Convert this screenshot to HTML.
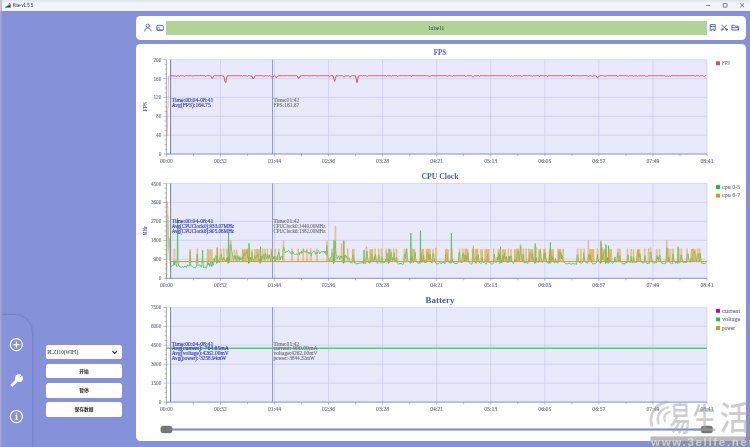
<!DOCTYPE html>
<html lang="zh">
<head>
<meta charset="utf-8">
<title>Kite-v1.5.5</title>
<style>
html,body{margin:0;padding:0;}
body{width:750px;height:447px;overflow:hidden;background:#8592d9;position:relative;font-family:'Liberation Serif','Noto Serif CJK SC',serif;}
.abs{position:absolute;}
#titlebar{left:0;top:0;width:750px;height:11.3px;background:linear-gradient(#dfe2ea 0,#e9ecf3 1.5px,#f1f4fa 3.5px,#f2f5fb 100%);}
#titletext{left:12.7px;top:2.7px;font-family:'Liberation Sans','Noto Sans CJK SC',sans-serif;font-size:4.5px;line-height:6px;color:#1a1a1a;white-space:nowrap;}
#leftedge{left:0;top:11.3px;width:1.7px;height:436px;background:linear-gradient(to right,#a9abc6 0,#9da2cc 60%,#8a96d6 100%);}
#leftedge2{left:0;top:0;width:1.6px;height:11.3px;background:linear-gradient(to right,#cfd0d6 0,#c2c3ca 65%,#9c9da6 100%);}
.card{background:#fff;border-radius:4.5px;}
#toolbar{left:136px;top:16px;width:610px;height:24px;}
#green{left:166px;top:21px;width:541px;height:14px;background:#b1d39a;}
#main{left:136px;top:44px;width:610px;height:396.5px;}
#tab{left:-4px;top:315px;width:35.6px;height:140px;background:#8693da;border-top-right-radius:18px;box-shadow:0 0 3px rgba(40,50,110,0.38);}
.ctl{left:46px;width:76px;height:14.4px;background:#fff;border-radius:2.6px;}
.btxt{left:46px;width:76px;text-align:center;font-family:'Liberation Sans','Noto Sans CJK SC',sans-serif;font-size:4.75px;line-height:6px;color:#1c1c1c;font-weight:bold;white-space:nowrap;}
#wm{left:650px;top:398px;width:100px;height:49px;overflow:hidden;}
</style>
</head>
<body>
<div id="titlebar" class="abs"></div>
<div id="tab" class="abs"></div>
<div id="toolbar" class="abs card"></div>
<div id="green" class="abs"></div>
<div id="main" class="abs card"></div>

<div class="abs ctl" style="top:345px"></div>
<div class="abs ctl" style="top:364.1px"></div>
<div class="abs ctl" style="top:383.3px"></div>
<div class="abs ctl" style="top:402.2px"></div>

<svg class="abs" style="left:0;top:0;will-change:transform" width="750" height="447" viewBox="0 0 750 447">
<!-- title bar icon -->
<g>
<path d="M5.2 7.6 L7.2 5.4 L8.2 5.9 L9.5 2.7 L10.7 4.2 L10.7 7.6 Z" fill="#3e3e30"/>
<path d="M9 4.4 L9.6 3.1 L10.3 4.2 L10.1 5.6 L9.1 5.5Z" fill="#cdb040"/>
<path d="M5 7.7 L5.6 6.5 L7.6 6.3 L8.6 7.7 Z" fill="#2fa4d6"/>
</g>
<!-- window controls -->
<g stroke="#222" stroke-width="0.55" fill="none">
<line x1="706.2" y1="5.5" x2="710.2" y2="5.5"/>
<rect x="723.2" y="3.6" width="3.8" height="3.6" rx="0.5"/>
<path d="M740.2 3.5 L744 7.3 M744 3.5 L740.2 7.3"/>
</g>
<!-- toolbar icons -->
<g stroke="#5261b2" stroke-width="0.92" fill="none" stroke-linecap="round" stroke-linejoin="round">
<circle cx="147.8" cy="25.8" r="1.7"/>
<path d="M144.6 31 C145 29 146.4 28 147.8 28 C149.2 28 150.6 29 151 31"/>
<rect x="156.8" y="25.4" width="6.5" height="5.1" rx="0.9"/>
<path d="M157.6 27.8 L159.8 27.8 L159.8 30 L157.6 30 Z M159.8 29.9 L162.6 29.9" stroke-width="0.6"/>
<path d="M710.6 24.6 L715.2 24.6 L715.2 30.5 L713.9 30.5 L713.9 29.2 L711.9 29.2 L711.9 30.5 L710.6 30.5 Z M710.6 26.4 L715.2 26.4"/>
<path d="M722 25.2 L726.6 29.6 M726.6 25.2 L722 29.6" />
<circle cx="722.1" cy="29.5" r="0.8"/><circle cx="726.5" cy="29.5" r="0.8"/>
<path d="M732.3 25.2 L734.6 25.2 L735.4 26.2 L738.3 26.2 L738.3 30 L732.3 30 Z M732.3 27.7 L738.9 27.7 L738.3 30"/>
</g>
<text x="436.6" y="29.9" font-size="5.2" fill="#2e3a2e" text-anchor="middle" font-family="'Liberation Serif','Noto Serif CJK SC',serif" textLength="15.6" lengthAdjust="spacingAndGlyphs">label1</text>

<rect x="170.6" y="59.7" width="536.40" height="94.30" fill="#e9e9fc"/>
<line x1="220.46" y1="59.7" x2="220.46" y2="154.0" stroke="#c3c7e8" stroke-width="0.6"/>
<line x1="274.52" y1="59.7" x2="274.52" y2="154.0" stroke="#c3c7e8" stroke-width="0.6"/>
<line x1="328.58" y1="59.7" x2="328.58" y2="154.0" stroke="#c3c7e8" stroke-width="0.6"/>
<line x1="382.64" y1="59.7" x2="382.64" y2="154.0" stroke="#c3c7e8" stroke-width="0.6"/>
<line x1="436.70" y1="59.7" x2="436.70" y2="154.0" stroke="#c3c7e8" stroke-width="0.6"/>
<line x1="490.76" y1="59.7" x2="490.76" y2="154.0" stroke="#c3c7e8" stroke-width="0.6"/>
<line x1="544.82" y1="59.7" x2="544.82" y2="154.0" stroke="#c3c7e8" stroke-width="0.6"/>
<line x1="598.88" y1="59.7" x2="598.88" y2="154.0" stroke="#c3c7e8" stroke-width="0.6"/>
<line x1="652.94" y1="59.7" x2="652.94" y2="154.0" stroke="#c3c7e8" stroke-width="0.6"/>
<line x1="707.00" y1="59.7" x2="707.00" y2="154.0" stroke="#c3c7e8" stroke-width="0.6"/>
<line x1="166.4" y1="59.70" x2="707.0" y2="59.70" stroke="#c3c7e8" stroke-width="0.6"/>
<line x1="166.4" y1="78.56" x2="707.0" y2="78.56" stroke="#c3c7e8" stroke-width="0.6"/>
<line x1="166.4" y1="97.42" x2="707.0" y2="97.42" stroke="#c3c7e8" stroke-width="0.6"/>
<line x1="166.4" y1="116.28" x2="707.0" y2="116.28" stroke="#c3c7e8" stroke-width="0.6"/>
<line x1="166.4" y1="135.14" x2="707.0" y2="135.14" stroke="#c3c7e8" stroke-width="0.6"/>
<polyline points="167.10,136.08 167.30,128.07 167.60,124.77 167.80,109.21 168.10,105.91 168.30,87.99 168.70,76.20 170.60,75.73" fill="none" stroke="#eba8b8" stroke-width="0.9" stroke-linejoin="round" opacity="1"/><polyline points="170.60,75.73 171.40,75.73 172.20,75.73 173.00,76.01 173.80,76.01 174.60,76.01 175.40,75.73 176.20,76.58 177.00,76.16 177.80,75.73 178.60,76.01 179.40,76.39 180.20,75.73 181.00,75.73 181.80,76.01 182.60,75.73 183.40,75.73 184.20,76.39 185.00,75.73 185.80,75.73 186.60,75.54 187.40,75.73 188.20,75.73 189.00,76.01 189.80,75.73 190.60,75.73 191.40,75.73 192.20,76.16 193.00,75.73 193.80,75.73 194.60,75.73 195.40,75.73 196.20,75.73 197.00,75.73 197.80,75.73 198.60,75.73 199.40,75.73 200.20,75.73 201.00,75.54 201.80,75.73 202.60,75.73 203.40,75.73 204.20,75.73 205.00,75.73 205.80,76.58 206.60,75.73 207.40,75.73 208.20,75.73 209.00,75.73 209.80,75.73 210.60,76.01 211.40,77.15 212.20,78.56 213.00,77.15 213.80,75.73 214.60,75.73 215.40,75.73 216.20,75.73 217.00,75.73 217.80,75.73 218.60,75.73 219.40,75.73 220.20,75.54 221.00,75.73 221.80,75.73 222.60,75.73 223.40,75.73 224.20,77.73 225.00,81.74 225.80,82.59 226.60,77.73 227.40,75.73 228.20,75.73 229.00,75.73 229.80,75.73 230.60,75.73 231.40,75.73 232.20,75.73 233.00,75.73 233.80,75.73 234.60,75.73 235.40,75.73 236.20,75.73 237.00,75.73 237.80,75.73 238.60,75.73 239.40,75.73 240.20,75.73 241.00,75.73 241.80,75.73 242.60,76.39 243.40,75.73 244.20,75.73 245.00,75.73 245.80,75.73 246.60,75.73 247.40,76.58 248.20,75.73 249.00,75.73 249.80,75.73 250.60,76.01 251.40,75.73 252.20,76.91 253.00,78.80 253.80,78.32 254.60,76.44 255.40,75.73 256.20,75.73 257.00,75.73 257.80,75.73 258.60,75.73 259.40,75.73 260.20,75.73 261.00,75.73 261.80,75.73 262.60,75.73 263.40,76.01 264.20,76.16 265.00,75.73 265.80,75.73 266.60,75.73 267.40,75.73 268.20,76.39 269.00,75.73 269.80,75.73 270.60,75.97 271.40,76.91 272.20,77.38 273.00,77.29 273.80,75.73 274.60,75.73 275.40,76.32 276.20,77.69 277.00,77.03 277.80,76.08 278.60,75.73 279.40,75.73 280.20,75.73 281.00,75.73 281.80,75.73 282.60,75.73 283.40,75.73 284.20,75.73 285.00,75.73 285.80,75.73 286.60,75.73 287.40,75.54 288.20,75.73 289.00,75.73 289.80,75.73 290.60,75.73 291.40,75.73 292.20,75.73 293.00,75.73 293.80,75.73 294.60,75.73 295.40,75.73 296.20,75.73 297.00,75.73 297.80,76.97 298.60,78.62 299.40,77.79 300.20,76.14 301.00,75.73 301.80,75.73 302.60,75.73 303.40,75.73 304.20,75.73 305.00,75.73 305.80,75.73 306.60,75.73 307.40,75.73 308.20,75.73 309.00,75.73 309.80,76.16 310.60,75.73 311.40,75.73 312.20,75.73 313.00,75.73 313.80,75.73 314.60,75.73 315.40,75.73 316.20,75.73 317.00,75.73 317.80,76.16 318.60,75.73 319.40,75.73 320.20,75.73 321.00,75.73 321.80,75.73 322.60,75.73 323.40,75.73 324.20,75.73 325.00,75.73 325.80,75.73 326.60,75.73 327.40,75.73 328.20,75.73 329.00,75.73 329.80,76.39 330.60,75.73 331.40,75.73 332.20,75.73 333.00,75.73 333.80,78.56 334.60,81.39 335.40,78.56 336.20,75.73 337.00,75.73 337.80,76.16 338.60,75.73 339.40,75.73 340.20,75.73 341.00,75.73 341.80,75.73 342.60,75.91 343.40,76.62 344.20,76.97 345.00,76.26 345.80,75.73 346.60,75.73 347.40,75.73 348.20,75.73 349.00,76.26 349.80,76.97 350.60,76.62 351.40,75.91 352.20,75.73 353.00,75.73 353.80,75.73 354.60,75.73 355.40,75.73 356.20,78.80 357.00,82.71 357.80,78.80 358.60,75.73 359.40,75.73 360.20,75.73 361.00,75.73 361.80,75.73 362.60,76.16 363.40,75.73 364.20,75.73 365.00,75.73 365.80,75.73 366.60,76.01 367.40,76.39 368.20,75.73 369.00,75.73 369.80,75.73 370.60,75.73 371.40,75.73 372.20,75.73 373.00,75.73 373.80,75.73 374.60,75.73 375.40,75.73 376.20,75.73 377.00,75.73 377.80,75.73 378.60,75.73 379.40,75.73 380.20,75.73 381.00,75.73 381.80,75.73 382.60,75.73 383.40,75.73 384.20,75.73 385.00,75.73 385.80,75.73 386.60,76.58 387.40,75.73 388.20,75.73 389.00,75.73 389.80,75.73 390.60,75.73 391.40,76.39 392.20,75.73 393.00,75.73 393.80,75.73 394.60,75.73 395.40,75.73 396.20,75.73 397.00,75.73 397.80,76.58 398.60,75.73 399.40,75.73 400.20,75.73 401.00,75.73 401.80,75.73 402.60,75.73 403.40,75.73 404.20,75.73 405.00,75.54 405.80,76.01 406.60,75.73 407.40,75.73 408.20,75.73 409.00,75.73 409.80,75.73 410.60,75.73 411.40,76.39 412.20,75.73 413.00,75.54 413.80,75.73 414.60,75.73 415.40,75.73 416.20,75.73 417.00,75.73 417.80,75.73 418.60,75.73 419.40,75.73 420.20,75.73 421.00,75.73 421.80,75.73 422.60,75.73 423.40,75.73 424.20,75.73 425.00,75.73 425.80,75.73 426.60,75.73 427.40,75.73 428.20,76.16 429.00,75.73 429.80,76.39 430.60,76.16 431.40,75.73 432.20,75.73 433.00,75.73 433.80,75.73 434.60,75.73 435.40,76.01 436.20,75.73 437.00,75.73 437.80,75.73 438.60,75.73 439.40,75.73 440.20,75.73 441.00,75.73 441.80,75.73 442.60,75.73 443.40,75.73 444.20,75.73 445.00,75.73 445.80,75.73 446.60,75.73 447.40,76.16 448.20,75.73 449.00,75.73 449.80,75.73 450.60,75.73 451.40,75.73 452.20,76.58 453.00,75.73 453.80,75.73 454.60,75.73 455.40,75.73 456.20,75.73 457.00,75.73 457.80,75.73 458.60,75.73 459.40,75.73 460.20,75.73 461.00,75.73 461.80,75.73 462.60,75.73 463.40,75.73 464.20,75.54 465.00,75.73 465.80,76.58 466.60,75.73 467.40,75.73 468.20,75.73 469.00,75.73 469.80,75.73 470.60,75.73 471.40,75.73 472.20,76.44 473.00,77.15 473.80,76.44 474.60,75.73 475.40,75.73 476.20,75.73 477.00,75.73 477.80,75.73 478.60,75.73 479.40,76.58 480.20,75.54 481.00,75.73 481.80,75.73 482.60,75.73 483.40,75.54 484.20,75.73 485.00,75.73 485.80,75.73 486.60,75.73 487.40,75.73 488.20,75.73 489.00,76.01 489.80,75.73 490.60,75.73 491.40,75.73 492.20,75.73 493.00,75.73 493.80,75.73 494.60,75.73 495.40,75.73 496.20,75.73 497.00,75.73 497.80,75.73 498.60,75.73 499.40,75.73 500.20,75.73 501.00,75.73 501.80,75.73 502.60,75.73 503.40,75.73 504.20,75.73 505.00,75.73 505.80,75.73 506.60,76.01 507.40,75.73 508.20,75.73 509.00,75.73 509.80,75.73 510.60,76.16 511.40,75.73 512.20,75.73 513.00,76.58 513.80,75.73 514.60,75.73 515.40,75.73 516.20,75.73 517.00,75.73 517.80,76.16 518.60,75.73 519.40,75.73 520.20,75.73 521.00,75.73 521.80,76.58 522.60,75.73 523.40,75.54 524.20,75.73 525.00,75.73 525.80,75.73 526.60,75.73 527.40,75.73 528.20,75.73 529.00,75.54 529.80,75.73 530.60,75.73 531.40,75.73 532.20,76.39 533.00,75.73 533.80,75.73 534.60,75.73 535.40,75.73 536.20,75.73 537.00,75.73 537.80,75.73 538.60,75.73 539.40,76.39 540.20,75.73 541.00,75.73 541.80,75.73 542.60,75.73 543.40,75.73 544.20,76.01 545.00,75.73 545.80,75.73 546.60,75.73 547.40,76.58 548.20,76.01 549.00,75.73 549.80,75.73 550.60,75.73 551.40,75.73 552.20,75.73 553.00,75.73 553.80,75.73 554.60,75.73 555.40,75.73 556.20,75.73 557.00,75.73 557.80,75.73 558.60,75.73 559.40,75.73 560.20,75.73 561.00,75.73 561.80,75.73 562.60,75.73 563.40,76.16 564.20,75.73 565.00,75.73 565.80,75.73 566.60,75.73 567.40,75.73 568.20,75.73 569.00,75.54 569.80,75.54 570.60,75.73 571.40,76.39 572.20,75.73 573.00,75.73 573.80,75.73 574.60,75.73 575.40,75.73 576.20,75.73 577.00,75.73 577.80,75.73 578.60,75.73 579.40,75.73 580.20,76.16 581.00,75.54 581.80,75.73 582.60,75.73 583.40,75.73 584.20,75.73 585.00,75.73 585.80,75.73 586.60,75.73 587.40,75.73 588.20,76.58 589.00,75.73 589.80,75.73 590.60,75.73 591.40,75.73 592.20,76.58 593.00,75.73 593.80,75.73 594.60,75.73 595.40,75.73 596.20,76.01 597.00,77.29 597.80,77.38 598.60,76.91 599.40,75.97 600.20,75.73 601.00,75.73 601.80,75.73 602.60,75.73 603.40,75.73 604.20,75.73 605.00,76.39 605.80,76.01 606.60,75.73 607.40,75.73 608.20,75.73 609.00,75.73 609.80,75.73 610.60,75.73 611.40,75.73 612.20,75.73 613.00,75.54 613.80,75.73 614.60,75.73 615.40,75.73 616.20,75.73 617.00,75.73 617.80,76.58 618.60,75.73 619.40,75.73 620.20,75.73 621.00,75.73 621.80,75.73 622.60,75.73 623.40,75.73 624.20,75.73 625.00,75.73 625.80,75.73 626.60,75.73 627.40,75.73 628.20,76.39 629.00,75.73 629.80,75.73 630.60,75.73 631.40,75.73 632.20,75.73 633.00,75.73 633.80,76.58 634.60,75.73 635.40,75.73 636.20,75.73 637.00,75.73 637.80,76.58 638.60,75.73 639.40,75.73 640.20,75.73 641.00,75.73 641.80,75.73 642.60,75.73 643.40,75.73 644.20,75.73 645.00,75.73 645.80,76.58 646.60,76.16 647.40,76.39 648.20,75.73 649.00,75.73 649.80,75.73 650.60,75.73 651.40,75.54 652.20,75.73 653.00,75.73 653.80,75.73 654.60,75.54 655.40,75.73 656.20,75.73 657.00,75.73 657.80,75.73 658.60,75.73 659.40,75.54 660.20,75.73 661.00,75.73 661.80,75.73 662.60,75.73 663.40,75.73 664.20,75.73 665.00,75.73 665.80,76.58 666.60,75.73 667.40,75.73 668.20,76.58 669.00,75.73 669.80,75.73 670.60,76.39 671.40,75.73 672.20,75.73 673.00,75.73 673.80,75.54 674.60,75.73 675.40,75.73 676.20,75.73 677.00,75.54 677.80,75.73 678.60,75.73 679.40,75.73 680.20,75.73 681.00,75.73 681.80,75.73 682.60,75.73 683.40,75.73 684.20,75.73 685.00,75.73 685.80,75.73 686.60,75.73 687.40,75.73 688.20,75.73 689.00,75.73 689.80,75.73 690.60,75.73 691.40,75.73 692.20,75.73 693.00,75.73 693.80,75.73 694.60,75.73 695.40,76.16 696.20,75.73 697.00,75.73 697.80,75.73 698.60,75.73 699.40,76.16 700.20,75.73 701.00,75.73 701.80,75.73 702.60,75.73 703.40,75.73 704.20,76.58 705.00,75.73 705.80,75.73" fill="none" stroke="#de4c6c" stroke-width="1.0" stroke-linejoin="round" opacity="1"/>
<line x1="166.4" y1="59.7" x2="166.4" y2="154.0" stroke="#8a90b8" stroke-width="0.8"/>
<line x1="166.0" y1="154.0" x2="707.0" y2="154.0" stroke="#7482d2" stroke-width="0.9"/>
<line x1="163.40" y1="59.70" x2="166.4" y2="59.70" stroke="#8a90b8" stroke-width="0.6"/>
<line x1="164.60" y1="64.42" x2="166.4" y2="64.42" stroke="#8a90b8" stroke-width="0.6"/>
<line x1="164.60" y1="69.13" x2="166.4" y2="69.13" stroke="#8a90b8" stroke-width="0.6"/>
<line x1="164.60" y1="73.84" x2="166.4" y2="73.84" stroke="#8a90b8" stroke-width="0.6"/>
<line x1="163.40" y1="78.56" x2="166.4" y2="78.56" stroke="#8a90b8" stroke-width="0.6"/>
<line x1="164.60" y1="83.28" x2="166.4" y2="83.28" stroke="#8a90b8" stroke-width="0.6"/>
<line x1="164.60" y1="87.99" x2="166.4" y2="87.99" stroke="#8a90b8" stroke-width="0.6"/>
<line x1="164.60" y1="92.71" x2="166.4" y2="92.71" stroke="#8a90b8" stroke-width="0.6"/>
<line x1="163.40" y1="97.42" x2="166.4" y2="97.42" stroke="#8a90b8" stroke-width="0.6"/>
<line x1="164.60" y1="102.13" x2="166.4" y2="102.13" stroke="#8a90b8" stroke-width="0.6"/>
<line x1="164.60" y1="106.85" x2="166.4" y2="106.85" stroke="#8a90b8" stroke-width="0.6"/>
<line x1="164.60" y1="111.56" x2="166.4" y2="111.56" stroke="#8a90b8" stroke-width="0.6"/>
<line x1="163.40" y1="116.28" x2="166.4" y2="116.28" stroke="#8a90b8" stroke-width="0.6"/>
<line x1="164.60" y1="121.00" x2="166.4" y2="121.00" stroke="#8a90b8" stroke-width="0.6"/>
<line x1="164.60" y1="125.71" x2="166.4" y2="125.71" stroke="#8a90b8" stroke-width="0.6"/>
<line x1="164.60" y1="130.43" x2="166.4" y2="130.43" stroke="#8a90b8" stroke-width="0.6"/>
<line x1="163.40" y1="135.14" x2="166.4" y2="135.14" stroke="#8a90b8" stroke-width="0.6"/>
<line x1="164.60" y1="139.86" x2="166.4" y2="139.86" stroke="#8a90b8" stroke-width="0.6"/>
<line x1="164.60" y1="144.57" x2="166.4" y2="144.57" stroke="#8a90b8" stroke-width="0.6"/>
<line x1="164.60" y1="149.29" x2="166.4" y2="149.29" stroke="#8a90b8" stroke-width="0.6"/>
<line x1="163.40" y1="154.00" x2="166.4" y2="154.00" stroke="#8a90b8" stroke-width="0.6"/>
<text x="161.30" y="61.70" font-size="5.2" fill="#6b7288" text-anchor="end" font-weight="normal" font-family="'Liberation Serif','Noto Serif CJK SC',serif" textLength="7.80" lengthAdjust="spacingAndGlyphs" stroke="#6b7288" stroke-width="0.12" >200</text>
<text x="161.30" y="80.56" font-size="5.2" fill="#6b7288" text-anchor="end" font-weight="normal" font-family="'Liberation Serif','Noto Serif CJK SC',serif" textLength="7.80" lengthAdjust="spacingAndGlyphs" stroke="#6b7288" stroke-width="0.12" >160</text>
<text x="161.30" y="99.42" font-size="5.2" fill="#6b7288" text-anchor="end" font-weight="normal" font-family="'Liberation Serif','Noto Serif CJK SC',serif" textLength="7.80" lengthAdjust="spacingAndGlyphs" stroke="#6b7288" stroke-width="0.12" >120</text>
<text x="161.30" y="118.28" font-size="5.2" fill="#6b7288" text-anchor="end" font-weight="normal" font-family="'Liberation Serif','Noto Serif CJK SC',serif" textLength="5.20" lengthAdjust="spacingAndGlyphs" stroke="#6b7288" stroke-width="0.12" >80</text>
<text x="161.30" y="137.14" font-size="5.2" fill="#6b7288" text-anchor="end" font-weight="normal" font-family="'Liberation Serif','Noto Serif CJK SC',serif" textLength="5.20" lengthAdjust="spacingAndGlyphs" stroke="#6b7288" stroke-width="0.12" >40</text>
<text x="161.30" y="156.00" font-size="5.2" fill="#6b7288" text-anchor="end" font-weight="normal" font-family="'Liberation Serif','Noto Serif CJK SC',serif" textLength="2.60" lengthAdjust="spacingAndGlyphs" stroke="#6b7288" stroke-width="0.12" >0</text>
<line x1="166.40" y1="154.0" x2="166.40" y2="156.60" stroke="#8a90b8" stroke-width="0.6"/>
<line x1="193.43" y1="154.0" x2="193.43" y2="156.20" stroke="#8a90b8" stroke-width="0.6"/>
<line x1="220.46" y1="154.0" x2="220.46" y2="156.60" stroke="#8a90b8" stroke-width="0.6"/>
<line x1="247.49" y1="154.0" x2="247.49" y2="156.20" stroke="#8a90b8" stroke-width="0.6"/>
<line x1="274.52" y1="154.0" x2="274.52" y2="156.60" stroke="#8a90b8" stroke-width="0.6"/>
<line x1="301.55" y1="154.0" x2="301.55" y2="156.20" stroke="#8a90b8" stroke-width="0.6"/>
<line x1="328.58" y1="154.0" x2="328.58" y2="156.60" stroke="#8a90b8" stroke-width="0.6"/>
<line x1="355.61" y1="154.0" x2="355.61" y2="156.20" stroke="#8a90b8" stroke-width="0.6"/>
<line x1="382.64" y1="154.0" x2="382.64" y2="156.60" stroke="#8a90b8" stroke-width="0.6"/>
<line x1="409.67" y1="154.0" x2="409.67" y2="156.20" stroke="#8a90b8" stroke-width="0.6"/>
<line x1="436.70" y1="154.0" x2="436.70" y2="156.60" stroke="#8a90b8" stroke-width="0.6"/>
<line x1="463.73" y1="154.0" x2="463.73" y2="156.20" stroke="#8a90b8" stroke-width="0.6"/>
<line x1="490.76" y1="154.0" x2="490.76" y2="156.60" stroke="#8a90b8" stroke-width="0.6"/>
<line x1="517.79" y1="154.0" x2="517.79" y2="156.20" stroke="#8a90b8" stroke-width="0.6"/>
<line x1="544.82" y1="154.0" x2="544.82" y2="156.60" stroke="#8a90b8" stroke-width="0.6"/>
<line x1="571.85" y1="154.0" x2="571.85" y2="156.20" stroke="#8a90b8" stroke-width="0.6"/>
<line x1="598.88" y1="154.0" x2="598.88" y2="156.60" stroke="#8a90b8" stroke-width="0.6"/>
<line x1="625.91" y1="154.0" x2="625.91" y2="156.20" stroke="#8a90b8" stroke-width="0.6"/>
<line x1="652.94" y1="154.0" x2="652.94" y2="156.60" stroke="#8a90b8" stroke-width="0.6"/>
<line x1="679.97" y1="154.0" x2="679.97" y2="156.20" stroke="#8a90b8" stroke-width="0.6"/>
<line x1="707.00" y1="154.0" x2="707.00" y2="156.60" stroke="#8a90b8" stroke-width="0.6"/>
<text x="166.40" y="162.70" font-size="5.2" fill="#6b7288" text-anchor="middle" font-weight="normal" font-family="'Liberation Serif','Noto Serif CJK SC',serif" textLength="13.00" lengthAdjust="spacingAndGlyphs" stroke="#6b7288" stroke-width="0.12" >00:00</text>
<text x="220.46" y="162.70" font-size="5.2" fill="#6b7288" text-anchor="middle" font-weight="normal" font-family="'Liberation Serif','Noto Serif CJK SC',serif" textLength="13.00" lengthAdjust="spacingAndGlyphs" stroke="#6b7288" stroke-width="0.12" >00:52</text>
<text x="274.52" y="162.70" font-size="5.2" fill="#6b7288" text-anchor="middle" font-weight="normal" font-family="'Liberation Serif','Noto Serif CJK SC',serif" textLength="13.00" lengthAdjust="spacingAndGlyphs" stroke="#6b7288" stroke-width="0.12" >01:44</text>
<text x="328.58" y="162.70" font-size="5.2" fill="#6b7288" text-anchor="middle" font-weight="normal" font-family="'Liberation Serif','Noto Serif CJK SC',serif" textLength="13.00" lengthAdjust="spacingAndGlyphs" stroke="#6b7288" stroke-width="0.12" >02:36</text>
<text x="382.64" y="162.70" font-size="5.2" fill="#6b7288" text-anchor="middle" font-weight="normal" font-family="'Liberation Serif','Noto Serif CJK SC',serif" textLength="13.00" lengthAdjust="spacingAndGlyphs" stroke="#6b7288" stroke-width="0.12" >03:28</text>
<text x="436.70" y="162.70" font-size="5.2" fill="#6b7288" text-anchor="middle" font-weight="normal" font-family="'Liberation Serif','Noto Serif CJK SC',serif" textLength="13.00" lengthAdjust="spacingAndGlyphs" stroke="#6b7288" stroke-width="0.12" >04:21</text>
<text x="490.76" y="162.70" font-size="5.2" fill="#6b7288" text-anchor="middle" font-weight="normal" font-family="'Liberation Serif','Noto Serif CJK SC',serif" textLength="13.00" lengthAdjust="spacingAndGlyphs" stroke="#6b7288" stroke-width="0.12" >05:13</text>
<text x="544.82" y="162.70" font-size="5.2" fill="#6b7288" text-anchor="middle" font-weight="normal" font-family="'Liberation Serif','Noto Serif CJK SC',serif" textLength="13.00" lengthAdjust="spacingAndGlyphs" stroke="#6b7288" stroke-width="0.12" >06:05</text>
<text x="598.88" y="162.70" font-size="5.2" fill="#6b7288" text-anchor="middle" font-weight="normal" font-family="'Liberation Serif','Noto Serif CJK SC',serif" textLength="13.00" lengthAdjust="spacingAndGlyphs" stroke="#6b7288" stroke-width="0.12" >06:57</text>
<text x="652.94" y="162.70" font-size="5.2" fill="#6b7288" text-anchor="middle" font-weight="normal" font-family="'Liberation Serif','Noto Serif CJK SC',serif" textLength="13.00" lengthAdjust="spacingAndGlyphs" stroke="#6b7288" stroke-width="0.12" >07:49</text>
<text x="707.00" y="162.70" font-size="5.2" fill="#6b7288" text-anchor="middle" font-weight="normal" font-family="'Liberation Serif','Noto Serif CJK SC',serif" textLength="13.00" lengthAdjust="spacingAndGlyphs" stroke="#6b7288" stroke-width="0.12" >08:41</text>
<line x1="170.6" y1="59.7" x2="170.6" y2="154.0" stroke="#747cb8" stroke-width="1.0"/>
<line x1="272.5" y1="59.7" x2="272.5" y2="154.0" stroke="#8a90b6" stroke-width="0.9"/>
<text x="171.70" y="102.25" font-size="5.2" fill="#2b35c8" text-anchor="start" font-weight="normal" font-family="'Liberation Serif','Noto Serif CJK SC',serif" textLength="41.60" lengthAdjust="spacingAndGlyphs" stroke="#2b35c8" stroke-width="0.12" >Time:00:04-08:41</text>
<text x="171.70" y="107.10" font-size="5.2" fill="#2b35c8" text-anchor="start" font-weight="normal" font-family="'Liberation Serif','Noto Serif CJK SC',serif" textLength="39.00" lengthAdjust="spacingAndGlyphs" stroke="#2b35c8" stroke-width="0.12" >Avg(FPS):164.75</text>
<text x="273.40" y="102.25" font-size="5.2" fill="#74747e" text-anchor="start" font-weight="normal" font-family="'Liberation Serif','Noto Serif CJK SC',serif" textLength="26.00" lengthAdjust="spacingAndGlyphs" stroke="#74747e" stroke-width="0.12" >Time:01:42</text>
<text x="273.40" y="107.10" font-size="5.2" fill="#74747e" text-anchor="start" font-weight="normal" font-family="'Liberation Serif','Noto Serif CJK SC',serif" textLength="26.00" lengthAdjust="spacingAndGlyphs" stroke="#74747e" stroke-width="0.12" >FPS:161.67</text>
<text transform="translate(146.6,106.85) rotate(-90)" font-size="6.2" font-weight="bold" fill="#4a5aa0" text-anchor="middle" font-family="'Liberation Serif','Noto Serif CJK SC',serif" textLength="9.30" lengthAdjust="spacingAndGlyphs">FPS</text>
<text x="440" y="55.40" font-size="8.2" font-weight="bold" fill="#4c5ca2" text-anchor="middle" font-family="'Liberation Serif','Noto Serif CJK SC',serif" textLength="12.36" lengthAdjust="spacingAndGlyphs">FPS</text>
<rect x="716" y="61.30" width="4" height="3.9" fill="#e24a5e"/>
<text x="722.10" y="64.90" font-size="5.2" fill="#6d7490" text-anchor="start" font-weight="normal" font-family="'Liberation Serif','Noto Serif CJK SC',serif" textLength="7.80" lengthAdjust="spacingAndGlyphs" stroke="#6d7490" stroke-width="0.12" >FPS</text>
<rect x="170.6" y="183.5" width="536.40" height="94.80" fill="#e9e9fc"/>
<line x1="220.46" y1="183.5" x2="220.46" y2="278.3" stroke="#c3c7e8" stroke-width="0.6"/>
<line x1="274.52" y1="183.5" x2="274.52" y2="278.3" stroke="#c3c7e8" stroke-width="0.6"/>
<line x1="328.58" y1="183.5" x2="328.58" y2="278.3" stroke="#c3c7e8" stroke-width="0.6"/>
<line x1="382.64" y1="183.5" x2="382.64" y2="278.3" stroke="#c3c7e8" stroke-width="0.6"/>
<line x1="436.70" y1="183.5" x2="436.70" y2="278.3" stroke="#c3c7e8" stroke-width="0.6"/>
<line x1="490.76" y1="183.5" x2="490.76" y2="278.3" stroke="#c3c7e8" stroke-width="0.6"/>
<line x1="544.82" y1="183.5" x2="544.82" y2="278.3" stroke="#c3c7e8" stroke-width="0.6"/>
<line x1="598.88" y1="183.5" x2="598.88" y2="278.3" stroke="#c3c7e8" stroke-width="0.6"/>
<line x1="652.94" y1="183.5" x2="652.94" y2="278.3" stroke="#c3c7e8" stroke-width="0.6"/>
<line x1="707.00" y1="183.5" x2="707.00" y2="278.3" stroke="#c3c7e8" stroke-width="0.6"/>
<line x1="166.4" y1="183.50" x2="707.0" y2="183.50" stroke="#c3c7e8" stroke-width="0.6"/>
<line x1="166.4" y1="202.46" x2="707.0" y2="202.46" stroke="#c3c7e8" stroke-width="0.6"/>
<line x1="166.4" y1="221.42" x2="707.0" y2="221.42" stroke="#c3c7e8" stroke-width="0.6"/>
<line x1="166.4" y1="240.38" x2="707.0" y2="240.38" stroke="#c3c7e8" stroke-width="0.6"/>
<line x1="166.4" y1="259.34" x2="707.0" y2="259.34" stroke="#c3c7e8" stroke-width="0.6"/>
<polyline points="166.60,278.30 167.00,240.38 167.40,214.05 168.00,217.21 168.60,246.70 169.40,238.27 170.00,263.55 170.60,265.66" fill="none" stroke="#7fd68a" stroke-width="0.9" stroke-linejoin="round" opacity="1"/><polyline points="166.60,278.30 167.20,201.41 167.80,206.67 168.40,246.70 169.40,259.34 170.60,261.24" fill="none" stroke="#e6c26a" stroke-width="0.9" stroke-linejoin="round" opacity="1"/><polyline points="170.90,267.47 171.50,265.97 172.10,265.42 172.70,265.52 173.30,265.46 173.90,260.80 174.50,264.95 175.10,261.25 175.70,263.21 176.30,265.31 176.90,266.75 177.10,263.55 177.60,218.05 178.10,262.50 178.70,266.05 179.30,265.98 179.90,267.07 180.50,267.11 181.10,267.63 181.70,267.24 182.30,266.39 182.90,267.11 183.50,267.25 184.10,267.17 184.70,265.91 185.30,266.96 185.90,265.89 186.50,267.59 187.10,265.88 187.70,264.88 188.30,265.99 188.90,266.24 189.50,265.84 189.60,263.55 190.10,251.33 190.60,262.50 190.70,265.64 191.30,265.45 191.90,266.46 192.50,266.85 193.10,267.03 193.70,267.76 194.30,267.50 194.90,268.14 195.50,267.95 196.10,266.74 196.70,263.55 197.20,254.07 197.70,262.50 197.90,265.75 198.50,264.94 199.10,264.71 199.70,265.10 200.30,265.21 200.90,266.81 201.50,267.24 202.10,263.55 202.60,250.07 203.10,262.50 203.30,266.99 203.90,268.03 204.50,267.15 205.10,266.43 205.70,267.81 206.30,268.34 206.90,267.04 207.50,262.35 208.10,265.10 208.70,262.72 209.30,264.02 209.90,266.52 210.50,261.32 211.10,263.82 211.70,266.72 212.30,261.80 212.90,265.30 213.50,265.10 214.10,258.06 214.70,261.00 215.30,257.34 215.90,255.43 216.50,256.54 216.80,263.55 217.30,247.75 217.80,262.50 218.30,260.21 218.90,262.21 219.50,262.63 220.10,256.63 220.70,255.02 221.30,254.19 221.90,258.91 222.50,260.43 223.10,258.46 223.70,257.46 224.30,260.01 224.90,260.18 225.50,260.31 226.10,261.95 226.70,257.96 227.30,261.28 227.90,257.31 228.10,263.55 228.60,232.59 229.10,262.50 229.70,256.54 230.30,244.53 230.90,244.61 231.50,250.13 232.10,252.22 232.70,257.36 233.30,260.74 233.90,258.14 234.50,255.59 235.10,258.50 235.70,255.66 236.30,259.86 236.90,261.00 237.50,256.82 238.10,255.54 238.70,259.07 239.30,260.75 239.90,256.65 240.50,259.58 241.10,259.51 241.70,258.14 242.30,256.76 242.90,260.80 243.50,254.17 244.10,252.65 244.70,255.62 245.30,254.77 245.90,253.19 246.50,253.90 247.10,249.60 247.70,257.56 248.30,257.42 248.50,263.55 249.00,243.22 249.50,262.50 250.10,257.04 250.70,259.39 251.30,260.60 251.90,252.10 252.50,257.16 253.10,260.36 253.70,261.66 254.30,258.01 254.90,255.67 255.50,258.75 256.10,257.79 256.70,255.49 257.30,256.52 257.90,253.30 258.50,257.61 259.10,260.55 259.70,259.39 260.00,263.55 260.50,246.70 261.00,262.50 261.50,257.29 262.10,255.82 262.70,258.64 263.30,254.71 263.90,255.27 264.50,259.90 265.10,253.30 265.70,254.42 266.30,258.73 266.90,258.50 267.50,254.09 268.10,258.76 268.70,256.48 269.30,254.80 269.90,258.59 270.50,260.52 271.10,257.49 271.70,251.47 272.30,256.47 272.90,258.19 273.50,258.91 274.10,256.07 274.70,260.02 275.30,261.98 275.90,256.43 276.50,257.26 277.10,259.95 277.70,255.90 278.30,254.53 278.90,252.05 279.50,256.89 280.10,259.91 280.70,256.77 281.30,256.65 281.90,256.10 282.50,259.50 283.10,249.61 283.70,247.15 284.30,249.68 284.90,251.40 285.50,253.00 286.10,251.79 286.70,251.04 287.30,251.53 287.90,251.32 288.50,250.29 289.10,250.83 289.70,251.50 290.30,252.73 290.90,253.65 291.50,253.94 292.10,251.26 292.70,253.33 293.30,252.29 293.90,253.63 294.50,254.34 295.10,254.63 295.70,254.16 296.30,253.99 296.90,254.01 297.50,254.65 298.10,254.25 298.70,253.40 299.30,254.77 299.90,252.12 300.50,252.65 301.10,253.67 301.70,251.20 302.30,252.81 302.90,251.91 303.50,249.13 304.10,251.48 304.70,251.87 305.30,251.36 305.90,252.40 306.50,250.20 307.10,251.81 307.70,252.99 308.30,252.27 308.90,253.99 309.50,253.46 310.10,252.14 310.70,253.36 311.30,256.24 311.90,252.70 312.50,252.57 313.10,251.98 313.70,250.94 314.30,250.44 314.90,252.39 315.50,254.37 316.10,252.05 316.70,253.87 317.30,252.75 317.90,251.59 318.50,250.52 319.10,251.70 319.70,253.75 320.30,252.78 320.90,252.51 321.50,251.74 322.10,252.21 322.70,251.91 323.30,251.08 323.90,251.91 324.50,252.66 325.10,250.93 325.70,253.03 326.30,255.02 326.90,245.29 327.50,252.22 328.10,257.42 328.70,258.69 329.30,261.22 329.90,262.14 330.50,257.20 331.10,257.04 331.70,257.28 332.30,252.57 332.90,253.22 333.50,263.55 334.00,240.38 334.50,262.50 334.70,256.74 335.30,241.21 335.90,254.18 336.50,254.76 337.10,258.81 337.70,257.60 338.30,256.62 338.90,255.63 339.50,259.46 340.10,257.71 340.70,255.96 341.30,257.91 341.90,256.49 342.50,256.62 343.10,257.81 343.30,263.55 343.80,240.80 344.30,262.50 344.90,255.00 345.50,255.84 346.10,257.43 346.70,256.01 347.30,258.27 347.90,259.42 348.50,258.83 349.10,257.73 349.70,260.68 350.30,262.68 350.90,263.04 351.50,262.85 352.10,262.05 352.70,254.67 353.30,255.24 353.90,260.32 354.50,262.56 355.10,263.60 355.70,263.11 356.30,263.63 356.90,264.17 357.50,263.12 358.10,262.89 358.70,263.85 359.30,263.01 359.90,263.15 360.50,262.92 361.10,263.02 361.70,262.67 362.30,262.72 362.90,262.65 363.50,263.55 364.00,249.86 364.50,262.50 364.70,263.40 365.30,263.23 365.90,263.49 366.50,253.51 367.10,251.43 367.70,258.34 368.30,261.01 368.90,263.09 369.50,262.87 370.10,263.14 370.70,262.13 371.30,254.56 371.90,254.06 372.50,259.70 373.10,261.61 373.70,261.64 374.30,256.69 374.90,259.74 375.50,254.14 376.10,258.63 376.70,261.50 377.30,263.20 377.90,263.31 378.50,255.23 379.10,255.69 379.70,260.04 380.30,262.35 380.90,263.40 381.50,262.17 382.10,256.64 382.70,261.26 383.30,263.19 383.90,262.23 384.50,262.35 385.10,261.91 385.70,259.03 386.30,260.65 386.90,252.98 387.50,258.45 388.10,261.74 388.50,263.55 389.00,248.81 389.50,262.50 389.90,261.89 390.50,255.99 391.10,252.17 391.70,257.80 392.30,260.74 392.90,257.46 393.50,259.94 394.10,252.66 394.70,257.88 395.30,261.56 395.90,262.28 396.50,257.06 397.10,261.54 397.70,263.57 398.30,264.39 398.90,263.58 399.50,264.20 400.10,263.03 400.70,264.04 401.30,263.12 401.90,264.01 402.50,264.55 403.10,264.06 403.70,263.97 404.30,254.10 404.90,254.01 405.50,258.54 406.10,251.97 406.70,248.78 407.30,257.04 407.90,260.92 408.50,261.25 409.10,262.05 409.70,261.72 410.30,262.50 410.40,263.55 410.90,233.01 411.40,262.50 411.50,261.64 412.10,255.91 412.70,260.55 413.30,262.39 413.90,262.14 414.50,257.42 415.10,252.16 415.70,258.75 416.30,261.49 416.90,262.16 417.50,262.03 418.10,263.51 418.70,263.30 419.30,262.48 419.90,263.61 420.00,263.55 420.50,230.69 421.00,262.50 421.10,253.57 421.70,259.09 422.30,261.32 422.90,262.31 423.50,255.10 424.10,259.99 424.70,260.94 425.30,263.06 425.90,259.94 426.50,262.24 427.10,253.51 427.70,252.56 428.30,259.32 428.90,254.49 429.50,259.73 430.10,254.03 430.70,259.38 431.30,261.75 431.90,263.24 432.50,255.36 433.10,253.05 433.70,254.59 434.30,260.04 434.90,261.91 435.50,261.91 436.10,263.39 436.70,263.72 437.30,264.09 437.90,263.67 438.50,262.98 439.10,263.39 439.70,262.74 440.30,262.54 440.90,263.88 441.50,263.50 442.10,262.28 442.70,262.54 443.30,261.90 443.90,262.72 444.50,263.48 445.10,263.67 445.70,254.28 446.30,253.42 446.90,253.27 447.50,258.78 448.10,261.94 448.70,261.70 449.30,262.81 449.90,262.39 450.50,263.04 450.90,263.55 451.40,233.01 451.90,262.50 452.30,258.99 452.90,261.78 453.50,262.15 454.10,262.49 454.70,263.71 455.30,263.05 455.90,264.06 456.50,263.56 457.10,263.77 457.70,262.73 458.30,262.04 458.90,253.67 459.50,251.98 460.10,259.27 460.70,261.78 461.30,263.07 461.90,262.24 462.50,254.97 463.10,252.87 463.70,259.29 464.30,261.92 464.90,254.59 465.50,256.41 466.10,260.86 466.70,255.54 467.30,260.10 467.90,252.27 468.50,259.06 469.10,262.22 469.70,263.03 470.30,263.88 470.90,263.61 471.50,264.14 472.10,264.00 472.70,257.73 473.30,249.32 473.90,257.99 474.50,260.76 475.10,261.62 475.70,263.09 476.30,263.57 476.90,256.43 477.50,259.90 478.10,254.43 478.70,258.83 479.30,262.21 479.90,262.68 480.50,263.42 481.10,263.76 481.70,263.08 482.30,257.23 482.90,261.46 483.50,262.82 484.10,262.10 484.70,262.45 485.30,263.48 485.90,264.04 486.50,263.86 487.10,260.07 487.70,254.14 488.30,260.32 488.90,262.33 489.50,262.50 490.10,262.90 490.70,263.35 491.30,263.91 491.90,263.79 492.50,264.04 493.10,263.80 493.70,258.59 494.30,254.00 494.90,259.27 495.50,261.98 496.10,262.62 496.70,261.95 497.30,256.97 497.90,260.35 498.50,252.49 499.10,259.24 499.70,253.97 500.00,263.55 500.50,246.70 501.00,262.50 501.50,260.44 502.10,262.40 502.70,255.08 503.30,260.60 503.90,257.13 504.50,252.83 505.10,258.63 505.70,260.48 506.30,256.37 506.90,259.96 507.50,261.66 508.10,262.89 508.70,257.22 509.30,256.07 509.90,260.81 510.50,256.30 511.10,255.73 511.70,260.76 512.30,262.45 512.90,263.13 513.50,263.79 514.10,262.62 514.70,259.44 515.30,261.44 515.90,258.69 516.50,260.63 517.10,255.10 517.70,251.64 518.30,251.71 518.90,258.77 519.50,260.54 520.10,250.06 520.70,246.42 521.30,256.02 521.90,259.53 522.50,261.07 523.10,253.99 523.70,259.91 524.30,262.14 524.90,263.38 525.50,262.30 526.10,262.43 526.70,262.89 527.30,263.08 527.90,263.71 528.50,259.74 529.10,261.42 529.70,255.48 530.30,253.18 530.90,254.41 531.50,253.74 532.10,259.63 532.70,253.61 533.30,259.70 533.90,261.96 534.50,262.33 534.70,263.55 535.20,243.54 535.70,262.50 536.30,257.79 536.90,260.80 537.50,261.85 538.10,261.87 538.70,262.57 539.30,255.36 539.90,251.34 540.50,250.45 541.10,257.12 541.70,261.19 542.30,262.42 542.90,261.96 543.50,257.28 544.10,253.70 544.70,259.21 545.30,252.96 545.90,258.01 546.50,261.11 547.10,262.59 547.70,262.78 548.30,263.47 548.90,262.94 549.50,254.19 549.90,263.55 550.40,242.49 550.90,262.50 551.30,262.11 551.90,255.53 552.50,259.86 553.10,257.23 553.70,261.21 554.30,262.91 554.90,262.90 555.50,258.41 556.10,261.13 556.70,262.34 557.30,262.40 557.90,263.39 558.50,256.39 559.10,250.88 559.70,258.69 560.30,256.45 560.90,252.32 561.50,259.16 562.10,255.29 562.70,259.11 563.30,261.20 563.90,262.24 564.50,262.27 565.10,263.47 565.70,263.71 566.30,263.25 566.90,263.90 567.50,264.01 568.10,263.10 568.70,263.40 569.30,263.00 569.90,263.76 570.50,264.19 571.10,264.05 571.70,264.28 572.30,263.05 572.90,263.70 573.50,263.51 574.10,264.19 574.70,263.75 575.30,263.82 575.90,263.82 576.50,264.39 577.10,255.49 577.70,254.11 578.30,260.28 578.90,262.16 579.50,262.23 580.10,263.08 580.70,263.09 581.30,263.64 581.90,262.79 582.50,262.00 583.10,261.70 583.70,252.75 584.30,257.91 584.90,261.03 585.50,262.10 586.10,262.57 586.70,262.31 587.30,263.45 587.90,262.63 588.50,254.52 589.10,253.85 589.70,259.80 590.30,254.91 590.90,259.23 591.50,262.34 592.10,262.70 592.70,263.91 593.30,264.05 593.90,263.22 594.50,263.59 595.10,263.81 595.70,263.08 596.30,262.74 596.90,262.02 597.50,254.12 598.10,259.57 598.70,261.20 599.30,261.58 599.90,262.14 600.50,263.55 601.00,241.43 601.50,262.50 601.70,247.48 602.30,256.26 602.90,259.80 603.50,253.37 604.10,252.18 604.70,251.48 605.30,251.18 605.50,263.55 606.00,244.59 606.50,262.50 607.10,261.56 607.70,257.41 608.10,263.55 608.60,245.65 609.10,262.50 609.50,262.21 610.10,259.60 610.70,261.74 611.30,261.99 611.90,262.31 612.50,263.52 613.10,263.30 613.70,262.26 614.30,262.16 614.90,256.92 615.50,260.98 616.10,261.25 616.70,262.17 617.30,255.27 617.90,252.40 618.50,259.40 619.10,261.19 619.70,255.43 620.30,259.66 620.90,262.31 621.50,262.71 622.10,263.07 622.70,263.80 623.30,263.43 623.90,264.15 624.50,263.92 625.10,262.96 625.70,263.02 626.30,262.05 626.90,263.13 627.50,257.72 628.10,254.78 628.70,260.40 629.30,261.04 629.90,262.27 630.50,263.06 631.10,256.41 631.70,261.11 632.30,261.28 632.90,263.01 633.50,256.68 634.10,260.69 634.70,262.43 635.30,262.29 635.90,262.38 636.50,262.23 637.10,255.31 637.70,250.23 638.30,251.10 638.90,257.97 639.50,254.09 640.10,253.68 640.70,259.69 641.30,262.37 641.90,261.90 642.50,262.70 643.10,263.37 643.70,262.66 644.30,262.58 644.90,255.45 645.50,259.04 646.10,262.24 646.70,263.24 647.30,263.99 647.90,262.68 648.50,263.23 649.10,263.02 649.70,263.27 650.30,252.60 650.90,251.99 651.50,258.22 652.10,261.10 652.70,262.16 653.30,262.55 653.90,263.43 654.50,262.92 655.10,262.33 655.70,263.01 656.30,263.10 656.90,255.46 657.50,259.20 658.10,256.72 658.70,260.54 659.30,257.98 659.90,255.10 660.50,259.90 661.10,262.23 661.70,263.21 662.30,262.99 662.90,263.80 663.50,263.08 664.10,263.11 664.70,263.90 665.30,263.41 665.90,263.63 666.50,253.23 667.10,247.93 667.70,256.26 668.30,260.95 668.90,256.73 669.50,261.18 670.10,262.98 670.70,263.57 671.30,263.06 671.90,263.67 672.50,263.72 673.10,254.09 673.70,260.11 674.30,261.02 674.90,261.24 675.50,262.98 676.10,263.22 676.70,262.39 677.30,262.26 677.50,263.55 678.00,246.70 678.50,262.50 679.10,260.78 679.70,262.82 680.30,262.31 680.90,255.03 681.50,254.81 682.10,259.79 682.70,261.69 683.30,262.89 683.90,262.09 684.50,262.27 685.10,262.49 685.70,261.81 686.30,262.91 686.90,254.98 687.50,255.12 688.10,253.85 688.70,259.07 689.30,261.19 689.90,261.34 690.50,262.39 691.10,258.23 691.70,257.58 692.30,261.65 692.90,253.81 693.50,253.08 694.10,251.07 694.70,251.71 695.30,255.67 695.90,259.70 696.50,262.06 697.10,255.22 697.70,253.62 698.30,253.78 698.90,258.56 699.50,260.92 700.10,253.30 700.70,258.51 701.30,262.14 701.90,263.71 702.50,262.84 703.10,263.53 703.70,263.78 704.30,263.05 704.90,263.78 705.50,263.02 706.10,262.97" fill="none" stroke="#35c04a" stroke-width="0.7" stroke-linejoin="round" opacity="1"/><polyline points="170.60,261.55 173.73,261.55 173.97,248.81 174.83,248.81 175.07,261.55 189.58,261.55 189.82,249.23 190.38,249.23 190.62,261.55 196.73,261.55 196.97,248.81 197.63,248.81 197.87,261.55 207.18,261.55 207.42,249.44 207.78,249.44 208.02,261.55 208.48,261.55 208.72,249.65 209.08,249.65 209.32,261.55 209.98,261.55 210.22,249.44 210.58,249.44 210.82,261.55 211.58,261.55 211.82,249.65 212.18,249.65 212.42,261.55 216.78,261.55 217.02,247.75 217.58,247.75 217.82,261.55 220.08,261.55 220.32,248.81 221.08,248.81 221.32,261.55 223.18,261.55 223.42,248.81 224.18,248.81 224.42,261.55 226.38,261.55 226.62,248.81 227.38,248.81 227.62,261.55 230.18,261.55 230.42,240.70 231.18,240.70 231.42,261.55 233.88,261.55 234.12,249.86 234.88,249.86 235.12,261.55 236.23,261.55 236.47,249.86 236.93,249.86 237.17,261.55 241.98,261.55 242.22,249.23 242.58,249.23 242.82,261.55 243.18,261.55 243.42,249.44 243.78,249.44 244.02,261.55 244.38,261.55 244.62,249.23 244.98,249.23 245.22,261.55 245.58,261.55 245.82,249.44 246.18,249.44 246.42,261.55 247.08,261.55 247.32,248.81 247.88,248.81 248.12,261.55 248.88,261.55 249.12,247.75 249.68,247.75 249.92,261.55 251.38,261.55 251.62,249.86 252.38,249.86 252.62,261.55 254.48,261.55 254.72,249.23 255.08,249.23 255.32,261.55 255.88,261.55 256.12,249.23 256.48,249.23 256.72,261.55 257.18,261.55 257.42,249.23 257.78,249.23 258.02,261.55 258.38,261.55 258.62,249.23 258.98,249.23 259.22,261.55 262.28,261.55 262.52,248.81 263.08,248.81 263.32,261.55 264.58,261.55 264.82,248.81 265.18,248.81 265.42,261.55 267.08,261.55 267.32,248.81 267.68,248.81 267.92,261.55 270.78,261.55 271.02,248.81 271.58,248.81 271.82,261.55 274.78,261.55 275.02,248.81 275.58,248.81 275.82,261.55 278.18,261.55 278.42,248.81 279.18,248.81 279.42,261.55 283.03,261.55 283.27,240.70 283.93,240.70 284.17,261.55 291.38,261.55 291.62,248.81 292.38,248.81 292.62,261.55 297.68,261.55 297.92,248.81 298.48,248.81 298.72,261.55 302.68,261.55 302.92,248.81 303.48,248.81 303.72,261.55 306.48,261.55 306.72,248.81 307.28,248.81 307.52,261.55 310.18,261.55 310.42,248.81 311.18,248.81 311.42,261.55 316.38,261.55 316.62,248.81 317.38,248.81 317.62,261.55 326.43,261.55 326.67,241.22 327.33,241.22 327.57,261.55 331.38,261.55 331.62,248.81 332.38,248.81 332.62,261.55 334.83,261.55 335.07,226.27 335.73,226.27 335.97,261.55 341.03,261.55 341.27,243.54 341.73,243.54 341.97,261.55 343.13,261.55 343.37,240.70 344.03,240.70 344.27,261.55 347.18,261.55 347.42,248.81 347.98,248.81 348.22,261.55 352.28,261.55 352.52,249.44 352.88,249.44 353.12,261.55 353.53,261.55 353.77,249.23 354.13,249.23 354.37,261.55 365.93,261.55 366.17,246.70 366.83,246.70 367.07,261.55 369.58,261.55 369.82,249.23 370.18,249.23 370.42,261.55 370.83,261.55 371.07,249.23 371.43,249.23 371.67,261.55 372.08,261.55 372.32,249.44 372.68,249.44 372.92,261.55 374.53,261.55 374.77,248.81 375.33,248.81 375.57,261.55 378.33,261.55 378.57,248.81 379.13,248.81 379.37,261.55 381.13,261.55 381.37,248.81 382.13,248.81 382.37,261.55 385.73,261.55 385.97,248.81 386.73,248.81 386.97,261.55 389.13,261.55 389.37,249.44 389.73,249.44 389.97,261.55 390.38,261.55 390.62,249.23 390.98,249.23 391.22,261.55 393.23,261.55 393.47,248.81 394.13,248.81 394.37,261.55 396.13,261.55 396.37,248.81 396.83,248.81 397.07,261.55 404.03,261.55 404.27,248.81 404.93,248.81 405.17,261.55 406.13,261.55 406.37,248.81 406.83,248.81 407.07,261.55 411.83,261.55 412.07,248.81 412.43,248.81 412.67,261.55 413.08,261.55 413.32,249.23 413.68,249.23 413.92,261.55 414.33,261.55 414.57,249.23 414.93,249.23 415.17,261.55 420.58,261.55 420.82,249.23 421.18,249.23 421.42,261.55 421.83,261.55 422.07,249.44 422.43,249.44 422.67,261.55 423.08,261.55 423.32,249.23 423.68,249.23 423.92,261.55 425.93,261.55 426.17,249.23 426.53,249.23 426.77,261.55 427.18,261.55 427.42,248.81 427.78,248.81 428.02,261.55 428.43,261.55 428.67,249.44 429.03,249.44 429.27,261.55 429.68,261.55 429.92,248.81 430.28,248.81 430.52,261.55 432.53,261.55 432.77,249.23 433.43,249.23 433.67,261.55 435.43,261.55 435.67,247.75 436.13,247.75 436.37,261.55 445.13,261.55 445.37,249.44 445.73,249.44 445.97,261.55 446.38,261.55 446.62,248.81 446.98,248.81 447.22,261.55 447.63,261.55 447.87,249.44 448.23,249.44 448.47,261.55 451.28,261.55 451.52,248.81 452.18,248.81 452.42,261.55 458.98,261.55 459.22,248.81 459.78,248.81 460.02,261.55 462.18,261.55 462.42,248.81 463.18,248.81 463.42,261.55 464.78,261.55 465.02,248.81 465.38,248.81 465.62,261.55 466.03,261.55 466.27,248.81 466.63,248.81 466.87,261.55 467.28,261.55 467.52,249.44 467.88,249.44 468.12,261.55 472.13,261.55 472.37,248.81 472.83,248.81 473.07,261.55 473.10,261.55 473.34,245.65 473.33,245.65 473.57,261.55 474.83,261.55 475.07,249.23 475.43,249.23 475.67,261.55 476.08,261.55 476.32,249.23 476.68,249.23 476.92,261.55 477.33,261.55 477.57,248.81 477.93,248.81 478.17,261.55 480.58,261.55 480.82,249.44 481.18,249.44 481.42,261.55 481.83,261.55 482.07,249.44 482.43,249.44 482.67,261.55 484.68,261.55 484.92,249.44 485.28,249.44 485.52,261.55 485.93,261.55 486.17,249.23 486.53,249.23 486.77,261.55 487.18,261.55 487.42,249.44 487.78,249.44 488.02,261.55 488.43,261.55 488.67,249.23 489.03,249.23 489.27,261.55 493.28,261.55 493.52,248.81 494.08,248.81 494.32,261.55 497.68,261.55 497.92,248.81 498.38,248.81 498.62,261.55 499.58,261.55 499.82,249.23 500.38,249.23 500.62,261.55 502.38,261.55 502.62,249.44 502.98,249.44 503.22,261.55 503.63,261.55 503.87,249.44 504.23,249.44 504.47,261.55 504.88,261.55 505.12,249.44 505.48,249.44 505.72,261.55 507.73,261.55 507.97,248.81 508.53,248.81 508.77,261.55 510.53,261.55 510.77,249.23 511.33,249.23 511.57,261.55 514.33,261.55 514.57,249.44 514.93,249.44 515.17,261.55 515.58,261.55 515.82,249.44 516.18,249.44 516.42,261.55 516.83,261.55 517.07,248.81 517.43,248.81 517.67,261.55 518.08,261.55 518.32,248.81 518.68,248.81 518.92,261.55 519.93,261.55 520.17,244.59 520.83,244.59 521.07,261.55 522.93,261.55 523.17,248.81 523.73,248.81 523.97,261.55 525.73,261.55 525.97,248.81 526.43,248.81 526.67,261.55 528.43,261.55 528.67,248.81 529.03,248.81 529.27,261.55 529.68,261.55 529.92,249.44 530.28,249.44 530.52,261.55 530.93,261.55 531.17,249.44 531.53,249.44 531.77,261.55 532.18,261.55 532.42,249.23 532.78,249.23 533.02,261.55 535.83,261.55 536.07,247.75 536.63,247.75 536.87,261.55 538.63,261.55 538.87,249.23 539.23,249.23 539.47,261.55 539.88,261.55 540.12,248.81 540.48,248.81 540.72,261.55 543.53,261.55 543.77,249.23 544.13,249.23 544.37,261.55 544.78,261.55 545.02,248.81 545.38,248.81 545.62,261.55 549.03,261.55 549.27,249.44 549.63,249.44 549.87,261.55 550.28,261.55 550.52,248.81 550.88,248.81 551.12,261.55 551.53,261.55 551.77,249.44 552.13,249.44 552.37,261.55 552.78,261.55 553.02,249.23 553.38,249.23 553.62,261.55 557.63,261.55 557.87,248.81 558.23,248.81 558.47,261.55 558.88,261.55 559.12,249.23 559.48,249.23 559.72,261.55 560.13,261.55 560.37,249.23 560.73,249.23 560.97,261.55 562.58,261.55 562.82,249.23 563.48,249.23 563.72,261.55 577.08,261.55 577.32,248.81 577.98,248.81 578.22,261.55 580.38,261.55 580.62,248.81 581.18,248.81 581.42,261.55 583.58,261.55 583.82,248.81 584.58,248.81 584.82,261.55 587.83,261.55 588.07,240.80 588.73,240.80 588.97,261.55 589.58,261.55 589.82,249.23 590.18,249.23 590.42,261.55 590.83,261.55 591.07,249.23 591.43,249.23 591.67,261.55 592.08,261.55 592.32,249.44 592.68,249.44 592.92,261.55 593.33,261.55 593.57,249.44 593.93,249.44 594.17,261.55 596.98,261.55 597.22,248.81 597.98,248.81 598.22,261.55 600.43,261.55 600.67,240.80 601.33,240.80 601.57,261.55 601.60,261.55 601.84,247.75 601.88,247.75 602.12,261.55 603.48,261.55 603.72,249.44 604.08,249.44 604.32,261.55 604.73,261.55 604.97,248.81 605.33,248.81 605.57,261.55 605.98,261.55 606.22,249.44 606.58,249.44 606.82,261.55 608.43,261.55 608.67,249.44 609.03,249.44 609.27,261.55 609.68,261.55 609.92,249.23 610.28,249.23 610.52,261.55 610.93,261.55 611.17,249.44 611.53,249.44 611.77,261.55 617.18,261.55 617.42,248.81 618.18,248.81 618.42,261.55 619.38,261.55 619.62,248.81 620.38,248.81 620.62,261.55 626.98,261.55 627.22,248.81 627.78,248.81 628.02,261.55 630.78,261.55 631.02,249.23 631.58,249.23 631.82,261.55 633.18,261.55 633.42,249.23 633.88,249.23 634.12,261.55 636.88,261.55 637.12,249.44 637.48,249.44 637.72,261.55 638.13,261.55 638.37,249.44 638.73,249.44 638.97,261.55 639.38,261.55 639.62,249.44 639.98,249.44 640.22,261.55 644.23,261.55 644.47,248.81 645.03,248.81 645.27,261.55 648.03,261.55 648.27,248.81 648.73,248.81 648.97,261.55 649.93,261.55 650.17,247.75 650.93,247.75 651.17,261.55 655.93,261.55 656.17,249.23 656.83,249.23 657.07,261.55 658.83,261.55 659.07,249.23 659.83,249.23 660.07,261.55 666.23,261.55 666.47,240.38 667.13,240.38 667.37,261.55 667.83,261.55 668.07,248.81 668.63,248.81 668.87,261.55 669.83,261.55 670.07,249.23 670.83,249.23 671.07,261.55 672.43,261.55 672.67,248.81 673.43,248.81 673.67,261.55 678.43,261.55 678.67,248.81 679.13,248.81 679.37,261.55 680.73,261.55 680.97,248.81 681.63,248.81 681.87,261.55 686.63,261.55 686.87,248.81 687.33,248.81 687.57,261.55 690.93,261.55 691.17,249.23 691.53,249.23 691.77,261.55 692.18,261.55 692.42,248.81 692.78,248.81 693.02,261.55 693.43,261.55 693.67,248.81 694.03,248.81 694.27,261.55 694.68,261.55 694.92,249.44 695.28,249.44 695.52,261.55 697.13,261.55 697.37,248.81 698.13,248.81 698.37,261.55 699.33,261.55 699.57,248.81 700.03,248.81 700.27,261.55 707.00,261.55" fill="none" stroke="#dba535" stroke-width="0.55" stroke-linejoin="round" opacity="1"/><line x1="170.6" y1="261.55" x2="707.0" y2="261.55" stroke="#d79a22" stroke-width="0.9"/>
<line x1="166.4" y1="183.5" x2="166.4" y2="278.3" stroke="#8a90b8" stroke-width="0.8"/>
<line x1="166.0" y1="278.3" x2="707.0" y2="278.3" stroke="#7482d2" stroke-width="0.9"/>
<line x1="163.40" y1="183.50" x2="166.4" y2="183.50" stroke="#8a90b8" stroke-width="0.6"/>
<line x1="164.60" y1="188.24" x2="166.4" y2="188.24" stroke="#8a90b8" stroke-width="0.6"/>
<line x1="164.60" y1="192.98" x2="166.4" y2="192.98" stroke="#8a90b8" stroke-width="0.6"/>
<line x1="164.60" y1="197.72" x2="166.4" y2="197.72" stroke="#8a90b8" stroke-width="0.6"/>
<line x1="163.40" y1="202.46" x2="166.4" y2="202.46" stroke="#8a90b8" stroke-width="0.6"/>
<line x1="164.60" y1="207.20" x2="166.4" y2="207.20" stroke="#8a90b8" stroke-width="0.6"/>
<line x1="164.60" y1="211.94" x2="166.4" y2="211.94" stroke="#8a90b8" stroke-width="0.6"/>
<line x1="164.60" y1="216.68" x2="166.4" y2="216.68" stroke="#8a90b8" stroke-width="0.6"/>
<line x1="163.40" y1="221.42" x2="166.4" y2="221.42" stroke="#8a90b8" stroke-width="0.6"/>
<line x1="164.60" y1="226.16" x2="166.4" y2="226.16" stroke="#8a90b8" stroke-width="0.6"/>
<line x1="164.60" y1="230.90" x2="166.4" y2="230.90" stroke="#8a90b8" stroke-width="0.6"/>
<line x1="164.60" y1="235.64" x2="166.4" y2="235.64" stroke="#8a90b8" stroke-width="0.6"/>
<line x1="163.40" y1="240.38" x2="166.4" y2="240.38" stroke="#8a90b8" stroke-width="0.6"/>
<line x1="164.60" y1="245.12" x2="166.4" y2="245.12" stroke="#8a90b8" stroke-width="0.6"/>
<line x1="164.60" y1="249.86" x2="166.4" y2="249.86" stroke="#8a90b8" stroke-width="0.6"/>
<line x1="164.60" y1="254.60" x2="166.4" y2="254.60" stroke="#8a90b8" stroke-width="0.6"/>
<line x1="163.40" y1="259.34" x2="166.4" y2="259.34" stroke="#8a90b8" stroke-width="0.6"/>
<line x1="164.60" y1="264.08" x2="166.4" y2="264.08" stroke="#8a90b8" stroke-width="0.6"/>
<line x1="164.60" y1="268.82" x2="166.4" y2="268.82" stroke="#8a90b8" stroke-width="0.6"/>
<line x1="164.60" y1="273.56" x2="166.4" y2="273.56" stroke="#8a90b8" stroke-width="0.6"/>
<line x1="163.40" y1="278.30" x2="166.4" y2="278.30" stroke="#8a90b8" stroke-width="0.6"/>
<text x="161.30" y="185.50" font-size="5.2" fill="#6b7288" text-anchor="end" font-weight="normal" font-family="'Liberation Serif','Noto Serif CJK SC',serif" textLength="10.40" lengthAdjust="spacingAndGlyphs" stroke="#6b7288" stroke-width="0.12" >4500</text>
<text x="161.30" y="204.46" font-size="5.2" fill="#6b7288" text-anchor="end" font-weight="normal" font-family="'Liberation Serif','Noto Serif CJK SC',serif" textLength="10.40" lengthAdjust="spacingAndGlyphs" stroke="#6b7288" stroke-width="0.12" >3600</text>
<text x="161.30" y="223.42" font-size="5.2" fill="#6b7288" text-anchor="end" font-weight="normal" font-family="'Liberation Serif','Noto Serif CJK SC',serif" textLength="10.40" lengthAdjust="spacingAndGlyphs" stroke="#6b7288" stroke-width="0.12" >2700</text>
<text x="161.30" y="242.38" font-size="5.2" fill="#6b7288" text-anchor="end" font-weight="normal" font-family="'Liberation Serif','Noto Serif CJK SC',serif" textLength="10.40" lengthAdjust="spacingAndGlyphs" stroke="#6b7288" stroke-width="0.12" >1800</text>
<text x="161.30" y="261.34" font-size="5.2" fill="#6b7288" text-anchor="end" font-weight="normal" font-family="'Liberation Serif','Noto Serif CJK SC',serif" textLength="7.80" lengthAdjust="spacingAndGlyphs" stroke="#6b7288" stroke-width="0.12" >900</text>
<text x="161.30" y="280.30" font-size="5.2" fill="#6b7288" text-anchor="end" font-weight="normal" font-family="'Liberation Serif','Noto Serif CJK SC',serif" textLength="2.60" lengthAdjust="spacingAndGlyphs" stroke="#6b7288" stroke-width="0.12" >0</text>
<line x1="166.40" y1="278.3" x2="166.40" y2="280.90" stroke="#8a90b8" stroke-width="0.6"/>
<line x1="193.43" y1="278.3" x2="193.43" y2="280.50" stroke="#8a90b8" stroke-width="0.6"/>
<line x1="220.46" y1="278.3" x2="220.46" y2="280.90" stroke="#8a90b8" stroke-width="0.6"/>
<line x1="247.49" y1="278.3" x2="247.49" y2="280.50" stroke="#8a90b8" stroke-width="0.6"/>
<line x1="274.52" y1="278.3" x2="274.52" y2="280.90" stroke="#8a90b8" stroke-width="0.6"/>
<line x1="301.55" y1="278.3" x2="301.55" y2="280.50" stroke="#8a90b8" stroke-width="0.6"/>
<line x1="328.58" y1="278.3" x2="328.58" y2="280.90" stroke="#8a90b8" stroke-width="0.6"/>
<line x1="355.61" y1="278.3" x2="355.61" y2="280.50" stroke="#8a90b8" stroke-width="0.6"/>
<line x1="382.64" y1="278.3" x2="382.64" y2="280.90" stroke="#8a90b8" stroke-width="0.6"/>
<line x1="409.67" y1="278.3" x2="409.67" y2="280.50" stroke="#8a90b8" stroke-width="0.6"/>
<line x1="436.70" y1="278.3" x2="436.70" y2="280.90" stroke="#8a90b8" stroke-width="0.6"/>
<line x1="463.73" y1="278.3" x2="463.73" y2="280.50" stroke="#8a90b8" stroke-width="0.6"/>
<line x1="490.76" y1="278.3" x2="490.76" y2="280.90" stroke="#8a90b8" stroke-width="0.6"/>
<line x1="517.79" y1="278.3" x2="517.79" y2="280.50" stroke="#8a90b8" stroke-width="0.6"/>
<line x1="544.82" y1="278.3" x2="544.82" y2="280.90" stroke="#8a90b8" stroke-width="0.6"/>
<line x1="571.85" y1="278.3" x2="571.85" y2="280.50" stroke="#8a90b8" stroke-width="0.6"/>
<line x1="598.88" y1="278.3" x2="598.88" y2="280.90" stroke="#8a90b8" stroke-width="0.6"/>
<line x1="625.91" y1="278.3" x2="625.91" y2="280.50" stroke="#8a90b8" stroke-width="0.6"/>
<line x1="652.94" y1="278.3" x2="652.94" y2="280.90" stroke="#8a90b8" stroke-width="0.6"/>
<line x1="679.97" y1="278.3" x2="679.97" y2="280.50" stroke="#8a90b8" stroke-width="0.6"/>
<line x1="707.00" y1="278.3" x2="707.00" y2="280.90" stroke="#8a90b8" stroke-width="0.6"/>
<text x="166.40" y="287.00" font-size="5.2" fill="#6b7288" text-anchor="middle" font-weight="normal" font-family="'Liberation Serif','Noto Serif CJK SC',serif" textLength="13.00" lengthAdjust="spacingAndGlyphs" stroke="#6b7288" stroke-width="0.12" >00:00</text>
<text x="220.46" y="287.00" font-size="5.2" fill="#6b7288" text-anchor="middle" font-weight="normal" font-family="'Liberation Serif','Noto Serif CJK SC',serif" textLength="13.00" lengthAdjust="spacingAndGlyphs" stroke="#6b7288" stroke-width="0.12" >00:52</text>
<text x="274.52" y="287.00" font-size="5.2" fill="#6b7288" text-anchor="middle" font-weight="normal" font-family="'Liberation Serif','Noto Serif CJK SC',serif" textLength="13.00" lengthAdjust="spacingAndGlyphs" stroke="#6b7288" stroke-width="0.12" >01:44</text>
<text x="328.58" y="287.00" font-size="5.2" fill="#6b7288" text-anchor="middle" font-weight="normal" font-family="'Liberation Serif','Noto Serif CJK SC',serif" textLength="13.00" lengthAdjust="spacingAndGlyphs" stroke="#6b7288" stroke-width="0.12" >02:36</text>
<text x="382.64" y="287.00" font-size="5.2" fill="#6b7288" text-anchor="middle" font-weight="normal" font-family="'Liberation Serif','Noto Serif CJK SC',serif" textLength="13.00" lengthAdjust="spacingAndGlyphs" stroke="#6b7288" stroke-width="0.12" >03:28</text>
<text x="436.70" y="287.00" font-size="5.2" fill="#6b7288" text-anchor="middle" font-weight="normal" font-family="'Liberation Serif','Noto Serif CJK SC',serif" textLength="13.00" lengthAdjust="spacingAndGlyphs" stroke="#6b7288" stroke-width="0.12" >04:21</text>
<text x="490.76" y="287.00" font-size="5.2" fill="#6b7288" text-anchor="middle" font-weight="normal" font-family="'Liberation Serif','Noto Serif CJK SC',serif" textLength="13.00" lengthAdjust="spacingAndGlyphs" stroke="#6b7288" stroke-width="0.12" >05:13</text>
<text x="544.82" y="287.00" font-size="5.2" fill="#6b7288" text-anchor="middle" font-weight="normal" font-family="'Liberation Serif','Noto Serif CJK SC',serif" textLength="13.00" lengthAdjust="spacingAndGlyphs" stroke="#6b7288" stroke-width="0.12" >06:05</text>
<text x="598.88" y="287.00" font-size="5.2" fill="#6b7288" text-anchor="middle" font-weight="normal" font-family="'Liberation Serif','Noto Serif CJK SC',serif" textLength="13.00" lengthAdjust="spacingAndGlyphs" stroke="#6b7288" stroke-width="0.12" >06:57</text>
<text x="652.94" y="287.00" font-size="5.2" fill="#6b7288" text-anchor="middle" font-weight="normal" font-family="'Liberation Serif','Noto Serif CJK SC',serif" textLength="13.00" lengthAdjust="spacingAndGlyphs" stroke="#6b7288" stroke-width="0.12" >07:49</text>
<text x="707.00" y="287.00" font-size="5.2" fill="#6b7288" text-anchor="middle" font-weight="normal" font-family="'Liberation Serif','Noto Serif CJK SC',serif" textLength="13.00" lengthAdjust="spacingAndGlyphs" stroke="#6b7288" stroke-width="0.12" >08:41</text>
<line x1="170.6" y1="183.5" x2="170.6" y2="278.3" stroke="#747cb8" stroke-width="1.0"/>
<line x1="272.5" y1="183.5" x2="272.5" y2="278.3" stroke="#8a90b6" stroke-width="0.9"/>
<text x="171.70" y="223.30" font-size="5.2" fill="#2b35c8" text-anchor="start" font-weight="normal" font-family="'Liberation Serif','Noto Serif CJK SC',serif" textLength="41.60" lengthAdjust="spacingAndGlyphs" stroke="#2b35c8" stroke-width="0.12" >Time:00:04-08:41</text>
<text x="171.70" y="228.15" font-size="5.2" fill="#2b35c8" text-anchor="start" font-weight="normal" font-family="'Liberation Serif','Noto Serif CJK SC',serif" textLength="62.40" lengthAdjust="spacingAndGlyphs" stroke="#2b35c8" stroke-width="0.12" >Avg(CPUClock0):933.07MHz</text>
<text x="171.70" y="233.00" font-size="5.2" fill="#2b35c8" text-anchor="start" font-weight="normal" font-family="'Liberation Serif','Noto Serif CJK SC',serif" textLength="62.40" lengthAdjust="spacingAndGlyphs" stroke="#2b35c8" stroke-width="0.12" >Avg(CPUClock6):905.06MHz</text>
<text x="273.40" y="223.30" font-size="5.2" fill="#74747e" text-anchor="start" font-weight="normal" font-family="'Liberation Serif','Noto Serif CJK SC',serif" textLength="26.00" lengthAdjust="spacingAndGlyphs" stroke="#74747e" stroke-width="0.12" >Time:01:42</text>
<text x="273.40" y="228.15" font-size="5.2" fill="#74747e" text-anchor="start" font-weight="normal" font-family="'Liberation Serif','Noto Serif CJK SC',serif" textLength="52.00" lengthAdjust="spacingAndGlyphs" stroke="#74747e" stroke-width="0.12" >CPUClock0:1440.00MHz</text>
<text x="273.40" y="233.00" font-size="5.2" fill="#74747e" text-anchor="start" font-weight="normal" font-family="'Liberation Serif','Noto Serif CJK SC',serif" textLength="52.00" lengthAdjust="spacingAndGlyphs" stroke="#74747e" stroke-width="0.12" >CPUClock6:1382.00MHz</text>
<text transform="translate(146.6,230.90) rotate(-90)" font-size="6.2" font-weight="bold" fill="#4a5aa0" text-anchor="middle" font-family="'Liberation Serif','Noto Serif CJK SC',serif" textLength="9.30" lengthAdjust="spacingAndGlyphs">MHz</text>
<text x="440" y="179.20" font-size="8.2" font-weight="bold" fill="#4c5ca2" text-anchor="middle" font-family="'Liberation Serif','Noto Serif CJK SC',serif" textLength="37.08" lengthAdjust="spacingAndGlyphs">CPU Clock</text>
<rect x="716" y="185.10" width="4" height="3.9" fill="#0ac832"/>
<text x="722.10" y="188.70" font-size="5.2" fill="#6d7490" text-anchor="start" font-weight="normal" font-family="'Liberation Serif','Noto Serif CJK SC',serif" textLength="18.20" lengthAdjust="spacingAndGlyphs" stroke="#6d7490" stroke-width="0.12" >cpu 0-5</text>
<rect x="716" y="193.70" width="4" height="3.9" fill="#d39a12"/>
<text x="722.10" y="197.30" font-size="5.2" fill="#6d7490" text-anchor="start" font-weight="normal" font-family="'Liberation Serif','Noto Serif CJK SC',serif" textLength="18.20" lengthAdjust="spacingAndGlyphs" stroke="#6d7490" stroke-width="0.12" >cpu 6-7</text>
<rect x="170.6" y="307.3" width="536.40" height="94.80" fill="#e9e9fc"/>
<line x1="220.46" y1="307.3" x2="220.46" y2="402.1" stroke="#c3c7e8" stroke-width="0.6"/>
<line x1="274.52" y1="307.3" x2="274.52" y2="402.1" stroke="#c3c7e8" stroke-width="0.6"/>
<line x1="328.58" y1="307.3" x2="328.58" y2="402.1" stroke="#c3c7e8" stroke-width="0.6"/>
<line x1="382.64" y1="307.3" x2="382.64" y2="402.1" stroke="#c3c7e8" stroke-width="0.6"/>
<line x1="436.70" y1="307.3" x2="436.70" y2="402.1" stroke="#c3c7e8" stroke-width="0.6"/>
<line x1="490.76" y1="307.3" x2="490.76" y2="402.1" stroke="#c3c7e8" stroke-width="0.6"/>
<line x1="544.82" y1="307.3" x2="544.82" y2="402.1" stroke="#c3c7e8" stroke-width="0.6"/>
<line x1="598.88" y1="307.3" x2="598.88" y2="402.1" stroke="#c3c7e8" stroke-width="0.6"/>
<line x1="652.94" y1="307.3" x2="652.94" y2="402.1" stroke="#c3c7e8" stroke-width="0.6"/>
<line x1="707.00" y1="307.3" x2="707.00" y2="402.1" stroke="#c3c7e8" stroke-width="0.6"/>
<line x1="166.4" y1="307.30" x2="707.0" y2="307.30" stroke="#c3c7e8" stroke-width="0.6"/>
<line x1="166.4" y1="326.26" x2="707.0" y2="326.26" stroke="#c3c7e8" stroke-width="0.6"/>
<line x1="166.4" y1="345.22" x2="707.0" y2="345.22" stroke="#c3c7e8" stroke-width="0.6"/>
<line x1="166.4" y1="364.18" x2="707.0" y2="364.18" stroke="#c3c7e8" stroke-width="0.6"/>
<line x1="166.4" y1="383.14" x2="707.0" y2="383.14" stroke="#c3c7e8" stroke-width="0.6"/>
<line x1="166.4" y1="348.23" x2="707.0" y2="348.23" stroke="#4fd072" stroke-width="1.5"/>
<line x1="166.4" y1="307.3" x2="166.4" y2="402.1" stroke="#8a90b8" stroke-width="0.8"/>
<line x1="166.0" y1="402.1" x2="707.0" y2="402.1" stroke="#7482d2" stroke-width="0.9"/>
<line x1="163.40" y1="307.30" x2="166.4" y2="307.30" stroke="#8a90b8" stroke-width="0.6"/>
<line x1="164.60" y1="312.04" x2="166.4" y2="312.04" stroke="#8a90b8" stroke-width="0.6"/>
<line x1="164.60" y1="316.78" x2="166.4" y2="316.78" stroke="#8a90b8" stroke-width="0.6"/>
<line x1="164.60" y1="321.52" x2="166.4" y2="321.52" stroke="#8a90b8" stroke-width="0.6"/>
<line x1="163.40" y1="326.26" x2="166.4" y2="326.26" stroke="#8a90b8" stroke-width="0.6"/>
<line x1="164.60" y1="331.00" x2="166.4" y2="331.00" stroke="#8a90b8" stroke-width="0.6"/>
<line x1="164.60" y1="335.74" x2="166.4" y2="335.74" stroke="#8a90b8" stroke-width="0.6"/>
<line x1="164.60" y1="340.48" x2="166.4" y2="340.48" stroke="#8a90b8" stroke-width="0.6"/>
<line x1="163.40" y1="345.22" x2="166.4" y2="345.22" stroke="#8a90b8" stroke-width="0.6"/>
<line x1="164.60" y1="349.96" x2="166.4" y2="349.96" stroke="#8a90b8" stroke-width="0.6"/>
<line x1="164.60" y1="354.70" x2="166.4" y2="354.70" stroke="#8a90b8" stroke-width="0.6"/>
<line x1="164.60" y1="359.44" x2="166.4" y2="359.44" stroke="#8a90b8" stroke-width="0.6"/>
<line x1="163.40" y1="364.18" x2="166.4" y2="364.18" stroke="#8a90b8" stroke-width="0.6"/>
<line x1="164.60" y1="368.92" x2="166.4" y2="368.92" stroke="#8a90b8" stroke-width="0.6"/>
<line x1="164.60" y1="373.66" x2="166.4" y2="373.66" stroke="#8a90b8" stroke-width="0.6"/>
<line x1="164.60" y1="378.40" x2="166.4" y2="378.40" stroke="#8a90b8" stroke-width="0.6"/>
<line x1="163.40" y1="383.14" x2="166.4" y2="383.14" stroke="#8a90b8" stroke-width="0.6"/>
<line x1="164.60" y1="387.88" x2="166.4" y2="387.88" stroke="#8a90b8" stroke-width="0.6"/>
<line x1="164.60" y1="392.62" x2="166.4" y2="392.62" stroke="#8a90b8" stroke-width="0.6"/>
<line x1="164.60" y1="397.36" x2="166.4" y2="397.36" stroke="#8a90b8" stroke-width="0.6"/>
<line x1="163.40" y1="402.10" x2="166.4" y2="402.10" stroke="#8a90b8" stroke-width="0.6"/>
<text x="161.30" y="309.30" font-size="5.2" fill="#6b7288" text-anchor="end" font-weight="normal" font-family="'Liberation Serif','Noto Serif CJK SC',serif" textLength="10.40" lengthAdjust="spacingAndGlyphs" stroke="#6b7288" stroke-width="0.12" >7500</text>
<text x="161.30" y="328.26" font-size="5.2" fill="#6b7288" text-anchor="end" font-weight="normal" font-family="'Liberation Serif','Noto Serif CJK SC',serif" textLength="10.40" lengthAdjust="spacingAndGlyphs" stroke="#6b7288" stroke-width="0.12" >6000</text>
<text x="161.30" y="347.22" font-size="5.2" fill="#6b7288" text-anchor="end" font-weight="normal" font-family="'Liberation Serif','Noto Serif CJK SC',serif" textLength="10.40" lengthAdjust="spacingAndGlyphs" stroke="#6b7288" stroke-width="0.12" >4500</text>
<text x="161.30" y="366.18" font-size="5.2" fill="#6b7288" text-anchor="end" font-weight="normal" font-family="'Liberation Serif','Noto Serif CJK SC',serif" textLength="10.40" lengthAdjust="spacingAndGlyphs" stroke="#6b7288" stroke-width="0.12" >3000</text>
<text x="161.30" y="385.14" font-size="5.2" fill="#6b7288" text-anchor="end" font-weight="normal" font-family="'Liberation Serif','Noto Serif CJK SC',serif" textLength="10.40" lengthAdjust="spacingAndGlyphs" stroke="#6b7288" stroke-width="0.12" >1500</text>
<text x="161.30" y="404.10" font-size="5.2" fill="#6b7288" text-anchor="end" font-weight="normal" font-family="'Liberation Serif','Noto Serif CJK SC',serif" textLength="2.60" lengthAdjust="spacingAndGlyphs" stroke="#6b7288" stroke-width="0.12" >0</text>
<line x1="166.40" y1="402.1" x2="166.40" y2="404.70" stroke="#8a90b8" stroke-width="0.6"/>
<line x1="193.43" y1="402.1" x2="193.43" y2="404.30" stroke="#8a90b8" stroke-width="0.6"/>
<line x1="220.46" y1="402.1" x2="220.46" y2="404.70" stroke="#8a90b8" stroke-width="0.6"/>
<line x1="247.49" y1="402.1" x2="247.49" y2="404.30" stroke="#8a90b8" stroke-width="0.6"/>
<line x1="274.52" y1="402.1" x2="274.52" y2="404.70" stroke="#8a90b8" stroke-width="0.6"/>
<line x1="301.55" y1="402.1" x2="301.55" y2="404.30" stroke="#8a90b8" stroke-width="0.6"/>
<line x1="328.58" y1="402.1" x2="328.58" y2="404.70" stroke="#8a90b8" stroke-width="0.6"/>
<line x1="355.61" y1="402.1" x2="355.61" y2="404.30" stroke="#8a90b8" stroke-width="0.6"/>
<line x1="382.64" y1="402.1" x2="382.64" y2="404.70" stroke="#8a90b8" stroke-width="0.6"/>
<line x1="409.67" y1="402.1" x2="409.67" y2="404.30" stroke="#8a90b8" stroke-width="0.6"/>
<line x1="436.70" y1="402.1" x2="436.70" y2="404.70" stroke="#8a90b8" stroke-width="0.6"/>
<line x1="463.73" y1="402.1" x2="463.73" y2="404.30" stroke="#8a90b8" stroke-width="0.6"/>
<line x1="490.76" y1="402.1" x2="490.76" y2="404.70" stroke="#8a90b8" stroke-width="0.6"/>
<line x1="517.79" y1="402.1" x2="517.79" y2="404.30" stroke="#8a90b8" stroke-width="0.6"/>
<line x1="544.82" y1="402.1" x2="544.82" y2="404.70" stroke="#8a90b8" stroke-width="0.6"/>
<line x1="571.85" y1="402.1" x2="571.85" y2="404.30" stroke="#8a90b8" stroke-width="0.6"/>
<line x1="598.88" y1="402.1" x2="598.88" y2="404.70" stroke="#8a90b8" stroke-width="0.6"/>
<line x1="625.91" y1="402.1" x2="625.91" y2="404.30" stroke="#8a90b8" stroke-width="0.6"/>
<line x1="652.94" y1="402.1" x2="652.94" y2="404.70" stroke="#8a90b8" stroke-width="0.6"/>
<line x1="679.97" y1="402.1" x2="679.97" y2="404.30" stroke="#8a90b8" stroke-width="0.6"/>
<line x1="707.00" y1="402.1" x2="707.00" y2="404.70" stroke="#8a90b8" stroke-width="0.6"/>
<text x="166.40" y="410.80" font-size="5.2" fill="#6b7288" text-anchor="middle" font-weight="normal" font-family="'Liberation Serif','Noto Serif CJK SC',serif" textLength="13.00" lengthAdjust="spacingAndGlyphs" stroke="#6b7288" stroke-width="0.12" >00:00</text>
<text x="220.46" y="410.80" font-size="5.2" fill="#6b7288" text-anchor="middle" font-weight="normal" font-family="'Liberation Serif','Noto Serif CJK SC',serif" textLength="13.00" lengthAdjust="spacingAndGlyphs" stroke="#6b7288" stroke-width="0.12" >00:52</text>
<text x="274.52" y="410.80" font-size="5.2" fill="#6b7288" text-anchor="middle" font-weight="normal" font-family="'Liberation Serif','Noto Serif CJK SC',serif" textLength="13.00" lengthAdjust="spacingAndGlyphs" stroke="#6b7288" stroke-width="0.12" >01:44</text>
<text x="328.58" y="410.80" font-size="5.2" fill="#6b7288" text-anchor="middle" font-weight="normal" font-family="'Liberation Serif','Noto Serif CJK SC',serif" textLength="13.00" lengthAdjust="spacingAndGlyphs" stroke="#6b7288" stroke-width="0.12" >02:36</text>
<text x="382.64" y="410.80" font-size="5.2" fill="#6b7288" text-anchor="middle" font-weight="normal" font-family="'Liberation Serif','Noto Serif CJK SC',serif" textLength="13.00" lengthAdjust="spacingAndGlyphs" stroke="#6b7288" stroke-width="0.12" >03:28</text>
<text x="436.70" y="410.80" font-size="5.2" fill="#6b7288" text-anchor="middle" font-weight="normal" font-family="'Liberation Serif','Noto Serif CJK SC',serif" textLength="13.00" lengthAdjust="spacingAndGlyphs" stroke="#6b7288" stroke-width="0.12" >04:21</text>
<text x="490.76" y="410.80" font-size="5.2" fill="#6b7288" text-anchor="middle" font-weight="normal" font-family="'Liberation Serif','Noto Serif CJK SC',serif" textLength="13.00" lengthAdjust="spacingAndGlyphs" stroke="#6b7288" stroke-width="0.12" >05:13</text>
<text x="544.82" y="410.80" font-size="5.2" fill="#6b7288" text-anchor="middle" font-weight="normal" font-family="'Liberation Serif','Noto Serif CJK SC',serif" textLength="13.00" lengthAdjust="spacingAndGlyphs" stroke="#6b7288" stroke-width="0.12" >06:05</text>
<text x="598.88" y="410.80" font-size="5.2" fill="#6b7288" text-anchor="middle" font-weight="normal" font-family="'Liberation Serif','Noto Serif CJK SC',serif" textLength="13.00" lengthAdjust="spacingAndGlyphs" stroke="#6b7288" stroke-width="0.12" >06:57</text>
<text x="652.94" y="410.80" font-size="5.2" fill="#6b7288" text-anchor="middle" font-weight="normal" font-family="'Liberation Serif','Noto Serif CJK SC',serif" textLength="13.00" lengthAdjust="spacingAndGlyphs" stroke="#6b7288" stroke-width="0.12" >07:49</text>
<text x="707.00" y="410.80" font-size="5.2" fill="#6b7288" text-anchor="middle" font-weight="normal" font-family="'Liberation Serif','Noto Serif CJK SC',serif" textLength="13.00" lengthAdjust="spacingAndGlyphs" stroke="#6b7288" stroke-width="0.12" >08:41</text>
<line x1="170.6" y1="307.3" x2="170.6" y2="402.1" stroke="#747cb8" stroke-width="1.0"/>
<line x1="272.5" y1="307.3" x2="272.5" y2="402.1" stroke="#8a90b6" stroke-width="0.9"/>
<text x="171.70" y="345.50" font-size="5.2" fill="#2b35c8" text-anchor="start" font-weight="normal" font-family="'Liberation Serif','Noto Serif CJK SC',serif" textLength="41.60" lengthAdjust="spacingAndGlyphs" stroke="#2b35c8" stroke-width="0.12" >Time:00:04-08:41</text>
<text x="171.70" y="350.35" font-size="5.2" fill="#2b35c8" text-anchor="start" font-weight="normal" font-family="'Liberation Serif','Noto Serif CJK SC',serif" textLength="57.20" lengthAdjust="spacingAndGlyphs" stroke="#2b35c8" stroke-width="0.12" >Avg(current):-764.65mA</text>
<text x="171.70" y="355.20" font-size="5.2" fill="#2b35c8" text-anchor="start" font-weight="normal" font-family="'Liberation Serif','Noto Serif CJK SC',serif" textLength="57.20" lengthAdjust="spacingAndGlyphs" stroke="#2b35c8" stroke-width="0.12" >Avg(voltage):4262.00mV</text>
<text x="171.70" y="360.05" font-size="5.2" fill="#2b35c8" text-anchor="start" font-weight="normal" font-family="'Liberation Serif','Noto Serif CJK SC',serif" textLength="54.60" lengthAdjust="spacingAndGlyphs" stroke="#2b35c8" stroke-width="0.12" >Avg(power):-3258.94mW</text>
<text x="273.40" y="345.50" font-size="5.2" fill="#74747e" text-anchor="start" font-weight="normal" font-family="'Liberation Serif','Noto Serif CJK SC',serif" textLength="26.00" lengthAdjust="spacingAndGlyphs" stroke="#74747e" stroke-width="0.12" >Time:01:42</text>
<text x="273.40" y="350.35" font-size="5.2" fill="#74747e" text-anchor="start" font-weight="normal" font-family="'Liberation Serif','Noto Serif CJK SC',serif" textLength="44.20" lengthAdjust="spacingAndGlyphs" stroke="#74747e" stroke-width="0.12" >current:-900.00mA</text>
<text x="273.40" y="355.20" font-size="5.2" fill="#74747e" text-anchor="start" font-weight="normal" font-family="'Liberation Serif','Noto Serif CJK SC',serif" textLength="44.20" lengthAdjust="spacingAndGlyphs" stroke="#74747e" stroke-width="0.12" >voltage:4262.00mV</text>
<text x="273.40" y="360.05" font-size="5.2" fill="#74747e" text-anchor="start" font-weight="normal" font-family="'Liberation Serif','Noto Serif CJK SC',serif" textLength="41.60" lengthAdjust="spacingAndGlyphs" stroke="#74747e" stroke-width="0.12" >power:-3844.32mW</text>
<text transform="translate(146.6,354.70) rotate(-90)" font-size="6.2" font-weight="bold" fill="#4a5aa0" text-anchor="middle" font-family="'Liberation Serif','Noto Serif CJK SC',serif" textLength="0.00" lengthAdjust="spacingAndGlyphs"></text>
<text x="440" y="303.00" font-size="8.2" font-weight="bold" fill="#4c5ca2" text-anchor="middle" font-family="'Liberation Serif','Noto Serif CJK SC',serif" textLength="28.84" lengthAdjust="spacingAndGlyphs">Battery</text>
<rect x="716" y="308.90" width="4" height="3.9" fill="#c800a2"/>
<text x="722.10" y="312.50" font-size="5.2" fill="#6d7490" text-anchor="start" font-weight="normal" font-family="'Liberation Serif','Noto Serif CJK SC',serif" textLength="18.20" lengthAdjust="spacingAndGlyphs" stroke="#6d7490" stroke-width="0.12" >current</text>
<rect x="716" y="317.50" width="4" height="3.9" fill="#12c83c"/>
<text x="722.10" y="321.10" font-size="5.2" fill="#6d7490" text-anchor="start" font-weight="normal" font-family="'Liberation Serif','Noto Serif CJK SC',serif" textLength="18.20" lengthAdjust="spacingAndGlyphs" stroke="#6d7490" stroke-width="0.12" >voltage</text>
<rect x="716" y="326.10" width="4" height="3.9" fill="#d39a12"/>
<text x="722.10" y="329.70" font-size="5.2" fill="#6d7490" text-anchor="start" font-weight="normal" font-family="'Liberation Serif','Noto Serif CJK SC',serif" textLength="13.00" lengthAdjust="spacingAndGlyphs" stroke="#6d7490" stroke-width="0.12" >power</text>

<!-- slider -->
<line x1="166" y1="429.5" x2="707" y2="429.5" stroke="#7886da" stroke-width="1.8"/>
<rect x="160.8" y="426" width="11.3" height="7" rx="2.3" fill="#777" stroke="#6a6a6a" stroke-width="0.4"/>
<rect x="701" y="426" width="11.6" height="7" rx="2.3" fill="#777" stroke="#6a6a6a" stroke-width="0.4"/>

<!-- sidebar icons -->
<g stroke="#fff" stroke-width="1.2" fill="none">
<circle cx="16.35" cy="344.6" r="6.05"/>
<path d="M13.2 344.6 L19.6 344.6 M16.4 341.5 L16.4 347.8" stroke-width="1.25"/>
<circle cx="16.35" cy="416.55" r="6.05"/>
<path d="M16.55 415.2 L16.55 419.3" stroke-width="1.35"/>
<path d="M15.2 419.3 L17.9 419.3 M15.4 415.5 L16.5 415.5" stroke-width="0.9"/>
<circle cx="16.5" cy="413.7" r="0.45" fill="#fff" stroke-width="0.6"/>
</g>
<!-- wrench -->
<circle cx="19" cy="378.2" r="3.9" fill="#fff"/>
<line x1="17.6" y1="379.7" x2="11.3" y2="386" stroke="#fff" stroke-width="2.9"/>
<line x1="22.6" y1="374.6" x2="19.9" y2="377.3" stroke="#8693da" stroke-width="0.95"/>
<text x="12.7" y="7.45" font-size="4.9" fill="#1a1a1a" font-family="'Liberation Sans','Noto Sans CJK SC',sans-serif" textLength="20.4" lengthAdjust="spacingAndGlyphs">Kite-v1.5.5</text>
<g font-size="4.75" font-weight="bold" fill="#1c1c1c" text-anchor="middle" font-family="'Liberation Sans','Noto Sans CJK SC',sans-serif">
<text x="84" y="372.9">开始</text>
<text x="84" y="392.0">暂停</text>
<text x="84" y="411.1">保存数据</text>
</g>
<!-- dropdown -->
<text x="47.2" y="354.1" font-size="5.2" fill="#1c1c1c" font-family="'Liberation Serif','Noto Serif CJK SC',serif" textLength="31" lengthAdjust="spacingAndGlyphs">PLZ110(WIFI)</text>
<path d="M112.7 351.4 L114.7 353.3 L116.7 351.4" stroke="#2a2a2a" stroke-width="1.15" fill="none" stroke-linecap="round" stroke-linejoin="round"/>

<!-- watermark -->
<rect x="650.4" y="436.4" width="99.6" height="10.6" fill="#8e8e8e" opacity="0.62"/>
<text x="651" y="446.1" font-size="11.5" font-weight="bold" fill="#f0f0f0" opacity="0.62" font-family="'Liberation Sans','Noto Sans CJK SC',sans-serif" textLength="101.5" lengthAdjust="spacing">www.3elife.net</text>
<g opacity="0.5" fill="none" stroke="#a6a6a6" stroke-linecap="round">
<path d="M651.6 425.5 C649 415 654.5 404.5 666.5 402" stroke-width="2.9"/>
<path d="M658.4 423.2 C656.4 415.5 660 409.2 668 407.4" stroke-width="2.5"/>
<path d="M664.8 421 C663.4 416.4 665.4 412.8 669.6 411.9" stroke-width="2.2"/>
</g>
<g font-weight="500" fill="#a6a6a6" opacity="0.56" font-family="'Liberation Sans','Noto Sans CJK SC',sans-serif" font-size="30">
<text transform="translate(669.6,430.6) scale(0.72,1.12)">易</text>
<text transform="translate(692.6,429.4) scale(0.8,1.0)">生</text>
<text transform="translate(719.6,430.4) scale(1.0,1.08)">活</text>
</g>
</svg>
<div id="leftedge" class="abs"></div>
<div id="leftedge2" class="abs"></div>
</body>
</html>
